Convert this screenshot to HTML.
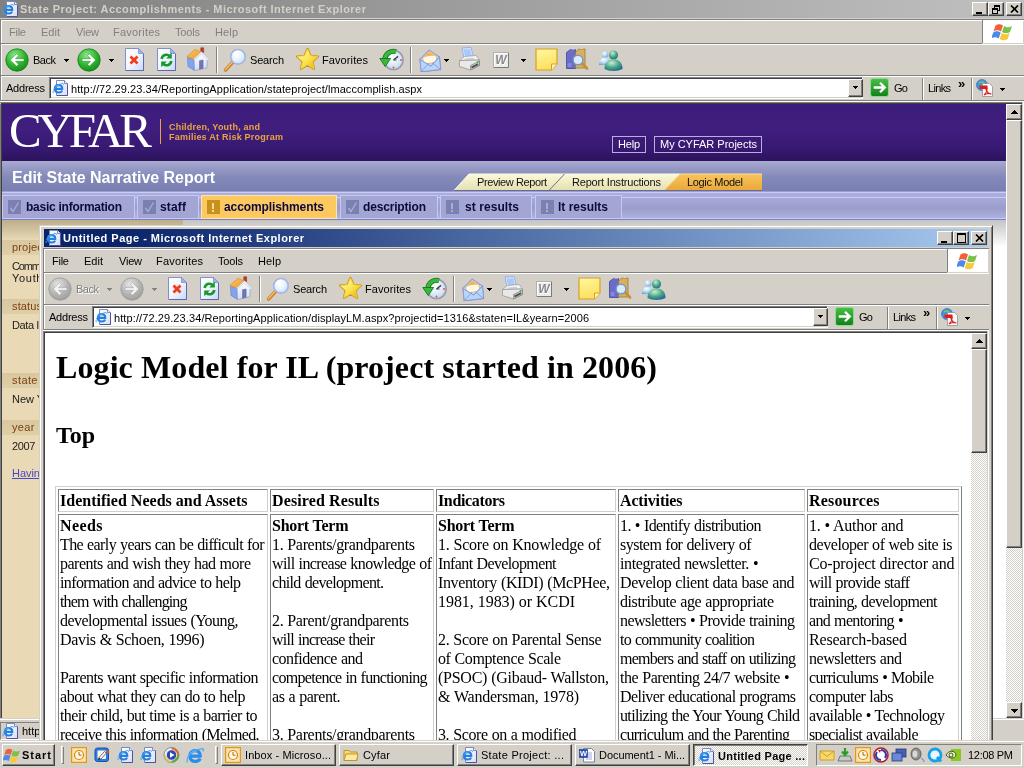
<!DOCTYPE html>
<html><head><meta charset="utf-8"><title>State Project: Accomplishments</title>
<style>
html,body{margin:0;padding:0}
body{width:1024px;height:768px;overflow:hidden;position:relative;background:#d4d0c8;font-family:"Liberation Sans",sans-serif}
div,span,svg{position:absolute}
.dith{background-color:#eae8e4;background-image:conic-gradient(#fff 25%,#d4d0c8 0 50%,#fff 0 75%,#d4d0c8 0);background-size:2px 2px}
</style></head><body><div id="root" style="left:0;top:0;width:1024px;height:768px;will-change:transform">
<div style="position:absolute;left:2px;top:104px;width:1004px;height:614px;background:#fff;"></div><div style="position:absolute;left:0px;top:102px;width:1px;height:617px;background:#808080;"></div><div style="position:absolute;left:1px;top:103px;width:1px;height:615px;background:#404040;"></div><div style="position:absolute;left:2px;top:104px;width:1004px;height:57px;background:linear-gradient(180deg,#3d1d7b 0%,#3f1e7e 45%,#371870 80%,#2c135c 100%);"></div><span id="t0" style="position:absolute;left:9px;top:103px;font:normal 49px/55px 'Liberation Serif', serif;color:#fff;white-space:pre;letter-spacing:-4.191px;">CYFAR</span><div style="position:absolute;left:160px;top:119px;width:1px;height:25px;background:#e9a33c;"></div><span id="t1" style="position:absolute;left:169px;top:122px;font:bold 9px/10px 'Liberation Sans', sans-serif;color:#eaa540;white-space:pre;letter-spacing:0.201px;">Children, Youth, and</span><span id="t2" style="position:absolute;left:169px;top:132px;font:bold 9px/10px 'Liberation Sans', sans-serif;color:#eaa540;white-space:pre;letter-spacing:0.230px;">Families At Risk Program</span><div style="position:absolute;left:612px;top:136px;width:34px;height:17px;background:transparent;box-sizing:border-box;border:1px solid #b9aede;"></div><span id="t3" style="position:absolute;left:618px;top:138px;font:normal 11px/12px 'Liberation Sans', sans-serif;color:#fff;white-space:pre;letter-spacing:-0.208px;">Help</span><div style="position:absolute;left:654px;top:136px;width:108px;height:17px;background:transparent;box-sizing:border-box;border:1px solid #b9aede;"></div><span id="t4" style="position:absolute;left:660px;top:138px;font:normal 11px/12px 'Liberation Sans', sans-serif;color:#fff;white-space:pre;letter-spacing:-0.012px;">My CYFAR Projects</span><div style="position:absolute;left:2px;top:161px;width:1004px;height:30px;background:linear-gradient(180deg,#a9acd0 0%,#9599c4 25%,#8389b8 55%,#797fb1 100%);"></div><span id="t5" style="position:absolute;left:12px;top:169px;font:bold 16px/17px 'Liberation Sans', sans-serif;color:#fff;white-space:pre;letter-spacing:-0.023px;">Edit State Narrative Report</span><svg style="position:absolute;left:452px;top:173px" width="312" height="19" viewBox="0 0 312 19">
<defs><linearGradient id="tc" x1="0" y1="0" x2="0" y2="1"><stop offset="0" stop-color="#fbf8d8"/><stop offset="1" stop-color="#e4e0b0"/></linearGradient>
<linearGradient id="to" x1="0" y1="0" x2="0" y2="1"><stop offset="0" stop-color="#f8c45c"/><stop offset="1" stop-color="#eaa838"/></linearGradient></defs>
<path d="M2 17.500L17 1h195L228 1 212 17.500z" fill="url(#tc)"/>
<path d="M2 17.500L17 1h211" fill="none" stroke="#fffef0" stroke-width="1"/>
<path d="M97 17.500L112.500 1" stroke="#6e6e8e" stroke-width="1"/>
<path d="M212 17.500L228 1h82v16.500z" fill="url(#to)"/>
<path d="M212 17.500L228 1h82" fill="none" stroke="#fce0a0" stroke-width="1"/>
<path d="M2 17.500h308" stroke="#6c6a92" stroke-width="1"/>
</svg><span id="t6" style="position:absolute;left:477px;top:176px;font:normal 11px/12px 'Liberation Sans', sans-serif;color:#111;white-space:pre;letter-spacing:-0.400px;">Preview Report</span><span id="t7" style="position:absolute;left:572px;top:176px;font:normal 11px/12px 'Liberation Sans', sans-serif;color:#111;white-space:pre;letter-spacing:-0.185px;">Report Instructions</span><span id="t8" style="position:absolute;left:687px;top:176px;font:normal 11px/12px 'Liberation Sans', sans-serif;color:#111;white-space:pre;letter-spacing:-0.333px;">Logic Model</span><div style="position:absolute;left:2px;top:191px;width:1004px;height:29px;background:linear-gradient(180deg,#9a9fd0 0,#9a9fd0 1px,#c9ccf6 1px,#c9ccf6 2px,#abaedc 2px,#abaedc 6px,#c9ccf6 6px,#c9ccf6 7px,#a8abd8 7px,#9a9dca 17px,#aeb1de 27px,#c8ccf8 27px,#c8ccf8 28px,#7c80c0 28px,#7c80c0 29px);"></div><div style="position:absolute;left:2px;top:195px;width:133px;height:24px;background:#a3a6d3;box-sizing:border-box;border:1px solid #c6c9f6;"></div><div style="position:absolute;left:8px;top:200px;width:13px;height:14px;background:#7b80b2;"></div><svg style="position:absolute;left:8px;top:200px" width="13" height="14" viewBox="0 0 13 14"><path d="M2.500 8l2.500 3.500L10.500 2.500" fill="none" stroke="#a9add9" stroke-width="1.300"/></svg><span id="t9" style="position:absolute;left:26px;top:200px;font:bold 12px/14px 'Liberation Sans', sans-serif;color:#0c0a3c;white-space:pre;letter-spacing:-0.251px;">basic information</span><div style="position:absolute;left:137px;top:195px;width:62px;height:24px;background:#a3a6d3;box-sizing:border-box;border:1px solid #c6c9f6;"></div><div style="position:absolute;left:143px;top:200px;width:13px;height:14px;background:#7b80b2;"></div><svg style="position:absolute;left:143px;top:200px" width="13" height="14" viewBox="0 0 13 14"><path d="M2.500 8l2.500 3.500L10.500 2.500" fill="none" stroke="#a9add9" stroke-width="1.300"/></svg><span id="t10" style="position:absolute;left:160px;top:200px;font:bold 12px/14px 'Liberation Sans', sans-serif;color:#0c0a3c;white-space:pre;letter-spacing:0.164px;">staff</span><div style="position:absolute;left:201px;top:195px;width:136px;height:24px;background:#fcc961;box-sizing:border-box;border:1px solid #ffe4a8;"></div><div style="position:absolute;left:207px;top:200px;width:13px;height:14px;background:#c8901c;"></div><div style="position:absolute;left:212px;top:203px;width:2px;height:6px;background:#f8dc98;"></div><div style="position:absolute;left:212px;top:210px;width:2px;height:2px;background:#f8dc98;"></div><span id="t11" style="position:absolute;left:224px;top:200px;font:bold 12px/14px 'Liberation Sans', sans-serif;color:#0c0a3c;white-space:pre;letter-spacing:-0.098px;">accomplishments</span><div style="position:absolute;left:340px;top:195px;width:98px;height:24px;background:#a3a6d3;box-sizing:border-box;border:1px solid #c6c9f6;"></div><div style="position:absolute;left:346px;top:200px;width:13px;height:14px;background:#7b80b2;"></div><svg style="position:absolute;left:346px;top:200px" width="13" height="14" viewBox="0 0 13 14"><path d="M2.500 8l2.500 3.500L10.500 2.500" fill="none" stroke="#a9add9" stroke-width="1.300"/></svg><span id="t12" style="position:absolute;left:363px;top:200px;font:bold 12px/14px 'Liberation Sans', sans-serif;color:#0c0a3c;white-space:pre;letter-spacing:-0.169px;">description</span><div style="position:absolute;left:440px;top:195px;width:92px;height:24px;background:#a3a6d3;box-sizing:border-box;border:1px solid #c6c9f6;"></div><div style="position:absolute;left:446px;top:200px;width:13px;height:14px;background:#7b80b2;"></div><div style="position:absolute;left:451px;top:203px;width:2px;height:6px;background:#a9add9;"></div><div style="position:absolute;left:451px;top:210px;width:2px;height:2px;background:#a9add9;"></div><span id="t13" style="position:absolute;left:465px;top:200px;font:bold 12px/14px 'Liberation Sans', sans-serif;color:#0c0a3c;white-space:pre;letter-spacing:0.071px;">st results</span><div style="position:absolute;left:535px;top:195px;width:87px;height:24px;background:#a3a6d3;box-sizing:border-box;border:1px solid #c6c9f6;"></div><div style="position:absolute;left:541px;top:200px;width:13px;height:14px;background:#7b80b2;"></div><div style="position:absolute;left:546px;top:203px;width:2px;height:6px;background:#a9add9;"></div><div style="position:absolute;left:546px;top:210px;width:2px;height:2px;background:#a9add9;"></div><span id="t14" style="position:absolute;left:558px;top:200px;font:bold 12px/14px 'Liberation Sans', sans-serif;color:#0c0a3c;white-space:pre;letter-spacing:-0.002px;">lt results</span><div style="position:absolute;left:2px;top:220px;width:181px;height:498px;background:#e9d9b4;"></div><div style="position:absolute;left:2px;top:220px;width:181px;height:20px;background:linear-gradient(180deg,#bcae8c,#e9d9b4);"></div><div style="position:absolute;left:183px;top:220px;width:823px;height:27px;background:linear-gradient(180deg,#c4c4c4,#ffffff);"></div><div style="position:absolute;left:2px;top:240px;width:181px;height:15px;background:linear-gradient(180deg,#d8c79f,#dfcfa8);"></div><span id="t15" style="position:absolute;left:12px;top:241px;font:normal 11px/12px 'Liberation Sans', sans-serif;color:#7b3f10;white-space:pre;letter-spacing:0.161px;">project</span><div style="position:absolute;left:2px;top:299px;width:181px;height:15px;background:linear-gradient(180deg,#d8c79f,#dfcfa8);"></div><span id="t16" style="position:absolute;left:12px;top:300px;font:normal 11px/12px 'Liberation Sans', sans-serif;color:#7b3f10;white-space:pre;letter-spacing:0.128px;">status</span><div style="position:absolute;left:2px;top:373px;width:181px;height:15px;background:linear-gradient(180deg,#d8c79f,#dfcfa8);"></div><span id="t17" style="position:absolute;left:12px;top:374px;font:normal 11px/12px 'Liberation Sans', sans-serif;color:#7b3f10;white-space:pre;letter-spacing:0.410px;">state</span><div style="position:absolute;left:2px;top:420px;width:181px;height:15px;background:linear-gradient(180deg,#d8c79f,#dfcfa8);"></div><span id="t18" style="position:absolute;left:12px;top:421px;font:normal 11px/12px 'Liberation Sans', sans-serif;color:#7b3f10;white-space:pre;letter-spacing:0.365px;">year</span><span id="t19" style="position:absolute;left:12px;top:260px;font:normal 11px/12px 'Liberation Sans', sans-serif;color:#222;white-space:pre;letter-spacing:-1.130px;">Comm</span><span id="t20" style="position:absolute;left:12px;top:272px;font:normal 11px/12px 'Liberation Sans', sans-serif;color:#222;white-space:pre;letter-spacing:0.688px;">Youth</span><span id="t21" style="position:absolute;left:12px;top:319px;font:normal 11px/12px 'Liberation Sans', sans-serif;color:#222;white-space:pre;letter-spacing:-0.411px;">Data In</span><span id="t22" style="position:absolute;left:12px;top:393px;font:normal 11px/12px 'Liberation Sans', sans-serif;color:#222;white-space:pre;letter-spacing:-0.051px;">New Y</span><span id="t23" style="position:absolute;left:12px;top:440px;font:normal 11px/12px 'Liberation Sans', sans-serif;color:#222;white-space:pre;letter-spacing:-0.328px;">2007</span><span id="t24" style="position:absolute;left:12px;top:467px;font:normal 11px/12px 'Liberation Sans', sans-serif;color:#4747c9;white-space:pre;letter-spacing:-0.050px;text-decoration:underline;">Having</span>
<div style="position:absolute;left:0px;top:0px;width:1024px;height:104px;background:#d4d0c8;"></div><div style="position:absolute;left:0px;top:0px;width:1024px;height:18px;background:linear-gradient(90deg,#808080 0%,#c0c0c0 100%);"></div><svg style="position:absolute;left:2px;top:1px" width="16" height="16" viewBox="0 0 16 16">
<defs><linearGradient id="g1" x1="0" y1="0" x2="1" y2="1"><stop offset="0" stop-color="#ffffff"/><stop offset="1" stop-color="#d9def6"/></linearGradient></defs>
<path d="M4.500 .5h8l3 3v12h-11z" fill="url(#g1)" stroke="#8088b8" stroke-width="1"/>
<path d="M12.500 .5v3h3" fill="#eef0ff" stroke="#6870b4" stroke-width=".8"/>
<path d="M15.500 4v11.500h-10.500" fill="none" stroke="#50549a" stroke-width="1"/>
<path d="M2.800 8.800h7.400c.2-2.300-1.300-3.700-3.500-3.700-2.300 0-3.800 1.500-3.800 3.700 0 2.200 1.600 3.700 3.900 3.700 1.600 0 2.700-.6 3.300-1.900" fill="none" stroke="#2480e2" stroke-width="2.200"/>
<path d="M3.200 7.300c.8-1.600 2.400-2.300 4-1.900" fill="none" stroke="#4cb4f6" stroke-width=".9"/>
<path d="M1.300 13.200C0 10.300 3.500 5.300 10 3.600c1.700-.4 2 .3 1.400 1.200" fill="none" stroke="#3e9cec" stroke-width=".9" stroke-dasharray="2.500 .6"/>
</svg><span id="t25" style="position:absolute;left:20px;top:3px;font:bold 11px/12px 'Liberation Sans', sans-serif;color:#d4d0c8;white-space:pre;letter-spacing:0.463px;">State Project: Accomplishments - Microsoft Internet Explorer</span><div style="position:absolute;left:972px;top:2px;width:16px;height:14px;background:#d4d0c8;box-sizing:border-box;border:1px solid;border-color:#fff #404040 #404040 #fff;box-shadow:inset -1px -1px 0 #808080, inset 1px 1px 0 #d4d0c8;"><div style="position:absolute;left:3px;top:9px;width:6px;height:2px;background:#000;"></div></div><div style="position:absolute;left:988px;top:2px;width:16px;height:14px;background:#d4d0c8;box-sizing:border-box;border:1px solid;border-color:#fff #404040 #404040 #fff;box-shadow:inset -1px -1px 0 #808080, inset 1px 1px 0 #d4d0c8;"><div style="position:absolute;left:5px;top:2px;width:6px;height:1px;background:#000;"></div><div style="position:absolute;left:5px;top:3px;width:6px;height:1px;background:#000;"></div><div style="position:absolute;left:5px;top:3px;width:1px;height:3px;background:#000;"></div><div style="position:absolute;left:10px;top:3px;width:1px;height:5px;background:#000;"></div><div style="position:absolute;left:8px;top:7px;width:3px;height:1px;background:#000;"></div><div style="position:absolute;left:3px;top:5px;width:6px;height:2px;background:#000;"></div><div style="position:absolute;left:3px;top:6px;width:1px;height:5px;background:#000;"></div><div style="position:absolute;left:8px;top:6px;width:1px;height:5px;background:#000;"></div><div style="position:absolute;left:3px;top:10px;width:6px;height:1px;background:#000;"></div></div><div style="position:absolute;left:1006px;top:2px;width:16px;height:14px;background:#d4d0c8;box-sizing:border-box;border:1px solid;border-color:#fff #404040 #404040 #fff;box-shadow:inset -1px -1px 0 #808080, inset 1px 1px 0 #d4d0c8;"><svg style="position:absolute;left:3px;top:2px" width="9" height="8" viewBox="0 0 8 8"><path d="M.5 .5l7 7M7.500 .5l-7 7" stroke="#000" stroke-width="1.700" fill="none"/></svg></div><div style="position:absolute;left:0px;top:19px;width:1024px;height:1px;background:#808080;"></div><div style="position:absolute;left:0px;top:20px;width:1024px;height:1px;background:#fff;"></div><div style="position:absolute;left:0px;top:19px;width:1px;height:82px;background:#808080;"></div><div style="position:absolute;left:1px;top:20px;width:1px;height:81px;background:#fff;"></div><span id="t26" style="position:absolute;left:9px;top:26px;font:normal 11px/12px 'Liberation Sans', sans-serif;color:#808080;white-space:pre;letter-spacing:-0.245px;">File</span><span id="t27" style="position:absolute;left:41px;top:26px;font:normal 11px/12px 'Liberation Sans', sans-serif;color:#808080;white-space:pre;letter-spacing:0.010px;">Edit</span><span id="t28" style="position:absolute;left:76px;top:26px;font:normal 11px/12px 'Liberation Sans', sans-serif;color:#808080;white-space:pre;letter-spacing:-0.219px;">View</span><span id="t29" style="position:absolute;left:113px;top:26px;font:normal 11px/12px 'Liberation Sans', sans-serif;color:#808080;white-space:pre;letter-spacing:0.219px;">Favorites</span><span id="t30" style="position:absolute;left:175px;top:26px;font:normal 11px/12px 'Liberation Sans', sans-serif;color:#808080;white-space:pre;letter-spacing:-0.172px;">Tools</span><span id="t31" style="position:absolute;left:215px;top:26px;font:normal 11px/12px 'Liberation Sans', sans-serif;color:#808080;white-space:pre;letter-spacing:0.125px;">Help</span><div style="position:absolute;left:982px;top:20px;width:1px;height:23px;background:#808080;"></div><div style="position:absolute;left:983px;top:21px;width:40px;height:22px;background:#fff;"></div><svg style="position:absolute;left:992px;top:22px" width="22" height="20" viewBox="0 0 22 20">
<path d="M3.500 3.500c3-2 5-1.500 7.500 0l-2 6c-2.500-1.500-4.500-2-7.500 0z" fill="#f0603a"/>
<path d="M12 4c2.500 1.500 5 1.800 8 0l-2 6c-3 1.800-5.500 1.500-8 0z" fill="#7cc04a"/>
<path d="M1.200 10.500c3-2 5-1.500 7.500 0l-2 6c-2.500-1.500-4.500-2-7.500 0z" fill="#4a8ae8" transform="translate(0 0)"/>
<path d="M9.700 11c2.500 1.500 5 1.800 8 0l-2 6c-3 1.800-5.500 1.500-8 0z" fill="#f8c838"/>
</svg><div style="position:absolute;left:0px;top:43px;width:982px;height:1px;background:#808080;"></div><div style="position:absolute;left:1px;top:44px;width:1023px;height:1px;background:#fff;"></div><svg style="position:absolute;left:5px;top:48px" width="24" height="24" viewBox="0 0 24 24">
<defs><radialGradient id="g2" cx=".4" cy=".3" r=".8"><stop offset="0" stop-color="#8fe88a"/><stop offset=".55" stop-color="#2db52d"/><stop offset="1" stop-color="#12801a"/></radialGradient></defs>
<circle cx="12" cy="12" r="11.2" fill="url(#g2)" stroke="#12801a" stroke-width=".8"/>
<g><path d="M5.2 12l6.4-6.2 1.9 1.9-3 3H19v2.6h-8.5l3 3-1.9 1.9z" fill="#ffffff" stroke="#12801a" stroke-width=".5"/></g>
</svg><span id="t32" style="position:absolute;left:33px;top:54px;font:normal 11px/12px 'Liberation Sans', sans-serif;color:#000;white-space:pre;letter-spacing:-0.490px;">Back</span><div style="position:absolute;left:64px;top:59px;width:5px;height:1px;background:#000;"></div><div style="position:absolute;left:65px;top:60px;width:3px;height:1px;background:#000;"></div><div style="position:absolute;left:66px;top:61px;width:1px;height:1px;background:#000;"></div><svg style="position:absolute;left:77px;top:48px" width="24" height="24" viewBox="0 0 24 24">
<defs><radialGradient id="g3" cx=".4" cy=".3" r=".8"><stop offset="0" stop-color="#8fe88a"/><stop offset=".55" stop-color="#2db52d"/><stop offset="1" stop-color="#12801a"/></radialGradient></defs>
<circle cx="12" cy="12" r="11.2" fill="url(#g3)" stroke="#12801a" stroke-width=".8"/>
<g transform="translate(24 0) scale(-1 1)"><path d="M5.2 12l6.4-6.2 1.9 1.9-3 3H19v2.6h-8.5l3 3-1.9 1.9z" fill="#ffffff" stroke="#12801a" stroke-width=".5"/></g>
</svg><div style="position:absolute;left:109px;top:59px;width:5px;height:1px;background:#000;"></div><div style="position:absolute;left:110px;top:60px;width:3px;height:1px;background:#000;"></div><div style="position:absolute;left:111px;top:61px;width:1px;height:1px;background:#000;"></div><svg style="position:absolute;left:125px;top:48px" width="19" height="23" viewBox="0 0 19 23"><defs><linearGradient id="g4" x1="0" y1="0" x2="1" y2="1"><stop offset="0" stop-color="#ffffff"/><stop offset=".5" stop-color="#f0f5ff"/><stop offset="1" stop-color="#c9d8f8"/></linearGradient></defs>
<path d="M.5 .5h13l5 5v17h-18z" fill="url(#g4)" stroke="#7f8fcf" stroke-width="1"/>
<path d="M13.500 .5v5h5z" fill="#9db4ee" stroke="#7f8fcf" stroke-width=".8"/>
<path d="M18.500 6v16.500H1" fill="none" stroke="#5c68b0" stroke-width="1"/><path d="M5.500 8.500l7 7M12.500 8.500l-7 7" stroke="#f43a17" stroke-width="2.800"/></svg><svg style="position:absolute;left:157px;top:48px" width="19" height="23" viewBox="0 0 19 23"><defs><linearGradient id="g5" x1="0" y1="0" x2="1" y2="1"><stop offset="0" stop-color="#ffffff"/><stop offset=".5" stop-color="#f0f5ff"/><stop offset="1" stop-color="#c9d8f8"/></linearGradient></defs>
<path d="M.5 .5h13l5 5v17h-18z" fill="url(#g5)" stroke="#7f8fcf" stroke-width="1"/>
<path d="M13.500 .5v5h5z" fill="#9db4ee" stroke="#7f8fcf" stroke-width=".8"/>
<path d="M18.500 6v16.500H1" fill="none" stroke="#5c68b0" stroke-width="1"/>
<path d="M4.700 11a4.800 4.800 0 0 1 8-3" fill="none" stroke="#169a26" stroke-width="2.600"/>
<path d="M14.800 4.800v5.600h-5.600z" fill="#169a26"/>
<path d="M14.300 13a4.800 4.800 0 0 1-8 3" fill="none" stroke="#169a26" stroke-width="2.600"/>
<path d="M4.200 19.200v-5.600h5.600z" fill="#169a26"/>
</svg><svg style="position:absolute;left:186px;top:47px" width="24" height="24" viewBox="0 0 24 24">
<defs><linearGradient id="g6" x1="0" y1="0" x2="1" y2="1"><stop offset="0" stop-color="#f9c565"/><stop offset="1" stop-color="#ee9a2a"/></linearGradient>
<linearGradient id="g7" x1="0" y1="0" x2="0" y2="1"><stop offset="0" stop-color="#ffffff"/><stop offset="1" stop-color="#d4dcf4"/></linearGradient></defs>
<path d="M14.800 .8h2.800v5l-2.800-1.500z" fill="#c63a20" stroke="#8a2410" stroke-width=".5"/>
<path d="M1.500 10.500L8 12.500l.5 11L2 19.500z" fill="#7fa6ea" stroke="#5a80cc" stroke-width=".6"/>
<path d="M8 12l7.500-6.500 7 7-1.500.8v7.500L8.500 23.500z" fill="url(#g7)" stroke="#8b9ad0" stroke-width=".7"/>
<path d="M.8 9.500L9 2.300l6.700 2.900L7.600 12.300z" fill="url(#g6)" stroke="#d98a1c" stroke-width=".6"/>
<path d="M15.500 4.800l7.700 7.700-1.200 1-6.600-6.600-7.400 6.200-.6-1z" fill="#fbfbff" stroke="#a3acd8" stroke-width=".5"/>
<path d="M13.500 13.800l3.600-.8v8.300l-3.600 1z" fill="#6f76b4" stroke="#565c9c" stroke-width=".5"/>
</svg><div style="position:absolute;left:216px;top:47px;width:1px;height:26px;background:#808080;"></div><div style="position:absolute;left:217px;top:47px;width:1px;height:26px;background:#fff;"></div><svg style="position:absolute;left:223px;top:48px" width="24" height="24" viewBox="0 0 24 24">
<defs><radialGradient id="g8" cx=".4" cy=".35" r=".75"><stop offset="0" stop-color="#ffffff"/><stop offset=".55" stop-color="#e4f1ff"/><stop offset="1" stop-color="#b5d4f8"/></radialGradient></defs>
<path d="M9.500 14.500L2.500 22" stroke="#c47e22" stroke-width="3.400" stroke-linecap="round"/>
<path d="M9.300 14.300L2.300 21.800" stroke="#f6c070" stroke-width="1.400" stroke-linecap="round"/>
<circle cx="15" cy="8.800" r="7.300" fill="url(#g8)" stroke="#a3b4e6" stroke-width="1.600"/>
<path d="M10.500 6.500a5 5 0 0 1 5-3" fill="none" stroke="#ffffff" stroke-width="1.400" stroke-linecap="round"/>
</svg><span id="t33" style="position:absolute;left:250px;top:54px;font:normal 11px/12px 'Liberation Sans', sans-serif;color:#000;white-space:pre;letter-spacing:-0.172px;">Search</span><svg style="position:absolute;left:294.5px;top:47px" width="25" height="24" viewBox="0 0 25 24">
<defs><linearGradient id="g9" x1="0" y1="0" x2="1" y2="1"><stop offset="0" stop-color="#fffcc0"/><stop offset=".55" stop-color="#fbe248"/><stop offset="1" stop-color="#e6a40c"/></linearGradient></defs>
<path d="M12.500 2l3 6.800 7.500 .7-5.700 5 1.800 7.300-6.600-4-6.600 4 1.800-7.300L2 9.500l7.500-.7z" fill="url(#g9)" stroke="#c8900e" stroke-width="2.200" stroke-linejoin="round"/>
<path d="M12.500 2l3 6.800 7.500 .7-5.700 5 1.800 7.300-6.600-4-6.600 4 1.800-7.300L2 9.500l7.500-.7z" fill="url(#g9)" stroke="#f4d23c" stroke-width=".9" stroke-linejoin="round"/>
</svg><span id="t34" style="position:absolute;left:322px;top:54px;font:normal 11px/12px 'Liberation Sans', sans-serif;color:#000;white-space:pre;letter-spacing:0.094px;">Favorites</span><svg style="position:absolute;left:379px;top:48px" width="25" height="24" viewBox="0 0 25 24">
<defs><radialGradient id="g10" cx=".45" cy=".4" r=".7"><stop offset="0" stop-color="#ffffff"/><stop offset="1" stop-color="#bcd4ee"/></radialGradient></defs>
<circle cx="14.500" cy="12" r="9.600" fill="url(#g10)" stroke="#9a9cb4" stroke-width="1.800"/>
<path d="M14.500 12l4.600-3.600" stroke="#3a4048" stroke-width="1.400"/><path d="M14.500 12h3" stroke="#3a4048" stroke-width="1"/>
<circle cx="22" cy="12" r=".9" fill="#e8482a"/><circle cx="14.500" cy="19.500" r=".9" fill="#e8482a"/>
<path d="M17 3.600A8.800 8.800 0 0 0 5.800 11.500" fill="none" stroke="#12781a" stroke-width="5"/>
<path d="M17 3.600A8.800 8.800 0 0 0 5.800 11.500" fill="none" stroke="#3cb63c" stroke-width="3.600"/>
<path d="M.8 10.500h10.800L6.200 18.500z" fill="#3cb63c" stroke="#12781a" stroke-width=".9" stroke-linejoin="round"/>
</svg><div style="position:absolute;left:410px;top:47px;width:1px;height:26px;background:#808080;"></div><div style="position:absolute;left:411px;top:47px;width:1px;height:26px;background:#fff;"></div><svg style="position:absolute;left:419px;top:47.5px" width="23" height="24" viewBox="0 0 23 24"><g transform="matrix(1 -.12 .1 1 -1.500 2)">
<path d="M1.500 9.500L11.500 1.500l9.500 8v12.500h-19.500z" fill="#c4e0fb" stroke="#8f96d4" stroke-width="1"/>
<path d="M4.500 8.500l7-5.500 6.500 5.500v6h-13.500z" fill="#fff8e4" stroke="#e0b060" stroke-width=".7"/>
<path d="M5 8.300l6.500-5L17.500 8.300c-4-1.500-8.500-1.500-12.500 0z" fill="#f4b454"/>
<path d="M1.500 9.500l10 8 9.500-8v12.500h-19.500z" fill="#b4d8fa" stroke="#8f96d4" stroke-width="1"/>
<path d="M1.500 22l8.300-7.600M21 22l-7.800-7.600" stroke="#8f96d4" stroke-width=".9"/></g>
</svg><div style="position:absolute;left:444px;top:59px;width:5px;height:1px;background:#000;"></div><div style="position:absolute;left:445px;top:60px;width:3px;height:1px;background:#000;"></div><div style="position:absolute;left:446px;top:61px;width:1px;height:1px;background:#000;"></div><svg style="position:absolute;left:457px;top:47px" width="24" height="24" viewBox="0 0 24 24">
<path d="M5 1l9-.5 2.500 9.500-9.500 1z" fill="#d8e8ff" stroke="#8aa4dc" stroke-width=".8"/>
<path d="M6.500 2.500l6.500-.4 2 7-7 .7z" fill="#a9c9fa"/>
<path d="M2.500 13.500l5-4 11.500-1 3.500 4.500z" fill="#f4f4f4" stroke="#9a9a9a" stroke-width=".7"/>
<path d="M7.500 11.500l9-.8 1.500 1.800-9.500 1z" fill="#d0d0d0"/>
<path d="M2.500 13.500l20-.5v5.500l-9 4.500-11-3.500z" fill="#e9e9e9" stroke="#8c8c8c" stroke-width=".7"/>
<path d="M13.500 18.500l9-4.500v4.500l-9 4.500z" fill="#bdbdbd" stroke="#7c7c7c" stroke-width=".6"/>
<path d="M14.500 20.500l6.500-3.200" stroke="#4c4c4c" stroke-width="1.600"/>
<circle cx="20.500" cy="15" r=".9" fill="#3cc43c"/>
</svg><svg style="position:absolute;left:493px;top:52px" width="16" height="16" viewBox="0 0 16 16">
<rect x=".5" y=".5" width="15" height="15" fill="#ececec" stroke="#b0b0b0"/>
<path d="M1 15.500h14.500V1" fill="none" stroke="#7a7a7a" stroke-width="1"/>
<path d="M1.500 14.500v-13h13" fill="none" stroke="#ffffff" stroke-width="1"/>
<text x="8.500" y="12.500" text-anchor="middle" font-family="Liberation Sans, sans-serif" font-weight="bold" font-style="italic" font-size="12" fill="#ffffff">W</text>
<text x="8" y="12" text-anchor="middle" font-family="Liberation Sans, sans-serif" font-weight="bold" font-style="italic" font-size="12" fill="#8a8a8a">W</text>
</svg><div style="position:absolute;left:521px;top:59px;width:5px;height:1px;background:#000;"></div><div style="position:absolute;left:522px;top:60px;width:3px;height:1px;background:#000;"></div><div style="position:absolute;left:523px;top:61px;width:1px;height:1px;background:#000;"></div><svg style="position:absolute;left:535px;top:48px" width="23" height="23" viewBox="0 0 23 23">
<defs><linearGradient id="g11" x1="0" y1="0" x2=".3" y2="1"><stop offset="0" stop-color="#fff8a0"/><stop offset="1" stop-color="#fde060"/></linearGradient></defs>
<path d="M1 1h21v15l-5.500 6H1z" fill="url(#g11)" stroke="#d8a020" stroke-width="1.200"/>
<path d="M22 16h-5.500v6" fill="#fff4b0" stroke="#d8a020" stroke-width="1"/>
</svg><svg style="position:absolute;left:565px;top:48px" width="24" height="23" viewBox="0 0 24 23">
<path d="M1.500 4.500l4-3h5v19h-9z" fill="#6a6cc8" stroke="#4044a0" stroke-width=".8"/>
<path d="M5.500 1.500l3-1 2 1z" fill="#e8e8f8"/>
<path d="M2.500 16h4M2.500 18h4" stroke="#a8aaf0" stroke-width=".9"/>
<path d="M10.500 4l3.500-3h6v19h-9.500z" fill="#d8b060" stroke="#a07828" stroke-width=".8"/>
<path d="M14 1l2.500-.8 2.500.8z" fill="#f4f0e0"/>
<path d="M16 14l6 6.500" stroke="#c89030" stroke-width="2.600" stroke-linecap="round"/>
<circle cx="13" cy="12" r="4.800" fill="#d8ecfc" stroke="#7898c8" stroke-width="1.400"/>
</svg><svg style="position:absolute;left:598px;top:48px" width="25" height="24" viewBox="0 0 25 24">
<defs><radialGradient id="g12" cx=".4" cy=".3" r=".8"><stop offset="0" stop-color="#c8f0d0"/><stop offset=".5" stop-color="#48a888"/><stop offset="1" stop-color="#205890"/></radialGradient>
<radialGradient id="g13" cx=".4" cy=".3" r=".8"><stop offset="0" stop-color="#ffffff"/><stop offset=".6" stop-color="#a8d0f0"/><stop offset="1" stop-color="#5890d0"/></radialGradient></defs>
<circle cx="7" cy="6.500" r="3.200" fill="url(#g13)"/>
<path d="M1 17c0-6 3-7.500 6-7.500s5 1.500 5.500 7.500z" fill="url(#g13)"/>
<circle cx="15.500" cy="7" r="4.600" fill="url(#g12)"/>
<path d="M6.500 21c0-7 4-9.500 9-9.500s9 2.500 9 9.500c-5 2.500-13 2.500-18 0z" fill="url(#g12)"/>
</svg><div style="position:absolute;left:0px;top:75px;width:1024px;height:1px;background:#808080;"></div><div style="position:absolute;left:1px;top:76px;width:1023px;height:1px;background:#fff;"></div><span id="t35" style="position:absolute;left:6px;top:82px;font:normal 11px/12px 'Liberation Sans', sans-serif;color:#000;white-space:pre;letter-spacing:-0.227px;">Address</span><div style="position:absolute;left:49px;top:77px;width:814px;height:22px;background:#fff;box-sizing:border-box;border:1px solid;border-color:#808080 #fff #fff #808080;box-shadow:inset 1px 1px 0 #404040, inset -1px -1px 0 #d4d0c8;"></div><svg style="position:absolute;left:52px;top:80px" width="16" height="16" viewBox="0 0 16 16">
<defs><linearGradient id="g14" x1="0" y1="0" x2="1" y2="1"><stop offset="0" stop-color="#ffffff"/><stop offset="1" stop-color="#d9def6"/></linearGradient></defs>
<path d="M4.500 .5h8l3 3v12h-11z" fill="url(#g14)" stroke="#8088b8" stroke-width="1"/>
<path d="M12.500 .5v3h3" fill="#eef0ff" stroke="#6870b4" stroke-width=".8"/>
<path d="M15.500 4v11.500h-10.500" fill="none" stroke="#50549a" stroke-width="1"/>
<path d="M2.800 8.800h7.400c.2-2.300-1.300-3.700-3.500-3.700-2.300 0-3.800 1.500-3.800 3.700 0 2.200 1.600 3.700 3.900 3.700 1.600 0 2.700-.6 3.300-1.900" fill="none" stroke="#2480e2" stroke-width="2.200"/>
<path d="M3.200 7.300c.8-1.600 2.400-2.300 4-1.900" fill="none" stroke="#4cb4f6" stroke-width=".9"/>
<path d="M1.300 13.200C0 10.300 3.500 5.300 10 3.600c1.700-.4 2 .3 1.400 1.200" fill="none" stroke="#3e9cec" stroke-width=".9" stroke-dasharray="2.500 .6"/>
</svg><span id="t36" style="position:absolute;left:71px;top:83px;font:normal 11px/12px 'Liberation Sans', sans-serif;color:#000;white-space:pre;letter-spacing:0.071px;">http://72.29.23.34/ReportingApplication/stateproject/lmaccomplish.aspx</span><div style="position:absolute;left:848px;top:79px;width:15px;height:18px;background:#d4d0c8;box-sizing:border-box;border:1px solid;border-color:#fff #404040 #404040 #fff;box-shadow:inset -1px -1px 0 #808080, inset 1px 1px 0 #d4d0c8;"><div style="position:absolute;left:4px;top:6px;width:5px;height:1px;background:#000;"></div><div style="position:absolute;left:5px;top:7px;width:3px;height:1px;background:#000;"></div><div style="position:absolute;left:6px;top:8px;width:1px;height:1px;background:#000;"></div></div><svg style="position:absolute;left:870px;top:78px" width="19" height="19" viewBox="0 0 18 18">
<defs><linearGradient id="g15" x1="0" y1="0" x2="0" y2="1"><stop offset="0" stop-color="#48c048"/><stop offset="1" stop-color="#108018"/></linearGradient></defs>
<rect x=".5" y=".5" width="17" height="17" rx="2" fill="url(#g15)" stroke="#8fd88f" stroke-width="1"/>
<path d="M3.500 9h10M9.500 4.500L14 9l-4.500 4.500" fill="none" stroke="#fff" stroke-width="2.200"/>
</svg><span id="t37" style="position:absolute;left:894px;top:82px;font:normal 11px/12px 'Liberation Sans', sans-serif;color:#000;white-space:pre;letter-spacing:-0.688px;">Go</span><div style="position:absolute;left:922px;top:78px;width:1px;height:22px;background:#808080;"></div><div style="position:absolute;left:923px;top:78px;width:1px;height:22px;background:#fff;"></div><span id="t38" style="position:absolute;left:928px;top:82px;font:normal 11px/12px 'Liberation Sans', sans-serif;color:#000;white-space:pre;letter-spacing:-0.672px;">Links</span><span id="t39" style="position:absolute;left:958px;top:76px;font:bold 13px/15px 'Liberation Sans', sans-serif;color:#000;white-space:pre;">»</span><div style="position:absolute;left:971px;top:78px;width:1px;height:22px;background:#808080;"></div><div style="position:absolute;left:972px;top:78px;width:1px;height:22px;background:#fff;"></div><svg style="position:absolute;left:976px;top:79px" width="18" height="18" viewBox="0 0 18 18">
<circle cx="6" cy="6" r="5.500" fill="#4890e0" stroke="#2860b0" stroke-width=".6"/>
<path d="M3 4c2-2 5-1 5 1s-3 1-3 3" fill="none" stroke="#70d060" stroke-width="1.400"/>
<path d="M6.500 4.500h7l3 3V17.500h-10z" fill="#fcfcfc" stroke="#909090" stroke-width=".8"/>
<path d="M3.500 6.500h8v3.500h-8z" fill="#d82020"/>
<path d="M8 16c2-2 3.500-5 3-7-.5-1-1.500 0-1 1.500 1 3 3 4.500 5.500 4.500-2-.8-5.500 0-7.500 1z" fill="none" stroke="#e02020" stroke-width="1.100"/>
</svg><div style="position:absolute;left:1000px;top:88px;width:5px;height:1px;background:#000;"></div><div style="position:absolute;left:1001px;top:89px;width:3px;height:1px;background:#000;"></div><div style="position:absolute;left:1002px;top:90px;width:1px;height:1px;background:#000;"></div><div style="position:absolute;left:0px;top:100px;width:1024px;height:1px;background:#808080;"></div><div style="position:absolute;left:0px;top:101px;width:1024px;height:1px;background:#fff;"></div><div style="position:absolute;left:0px;top:102px;width:1024px;height:1px;background:#808080;"></div><div style="position:absolute;left:1px;top:103px;width:1022px;height:1px;background:#404040;"></div>
<div style="position:absolute;left:1022px;top:102px;width:1px;height:617px;background:#d4d0c8;"></div><div style="position:absolute;left:1023px;top:102px;width:1px;height:618px;background:#fff;"></div><div class="dith" style="left:1006px;top:104px;width:16px;height:614px"></div><div style="position:absolute;left:1006px;top:104px;width:16px;height:16px;background:#d4d0c8;box-sizing:border-box;border:1px solid;border-color:#fff #404040 #404040 #fff;box-shadow:inset -1px -1px 0 #808080, inset 1px 1px 0 #d4d0c8;"><div style="position:absolute;left:7px;top:5px;width:1px;height:1px;background:#000;"></div><div style="position:absolute;left:6px;top:6px;width:3px;height:1px;background:#000;"></div><div style="position:absolute;left:5px;top:7px;width:5px;height:1px;background:#000;"></div><div style="position:absolute;left:4px;top:8px;width:7px;height:1px;background:#000;"></div></div><div style="position:absolute;left:1006px;top:120px;width:16px;height:428px;background:#d4d0c8;box-sizing:border-box;border:1px solid;border-color:#fff #404040 #404040 #fff;box-shadow:inset -1px -1px 0 #808080, inset 1px 1px 0 #d4d0c8;"></div><div style="position:absolute;left:1006px;top:702px;width:16px;height:16px;background:#d4d0c8;box-sizing:border-box;border:1px solid;border-color:#fff #404040 #404040 #fff;box-shadow:inset -1px -1px 0 #808080, inset 1px 1px 0 #d4d0c8;"><div style="position:absolute;left:4px;top:6px;width:7px;height:1px;background:#000;"></div><div style="position:absolute;left:5px;top:7px;width:5px;height:1px;background:#000;"></div><div style="position:absolute;left:6px;top:8px;width:3px;height:1px;background:#000;"></div><div style="position:absolute;left:7px;top:9px;width:1px;height:1px;background:#000;"></div></div><div style="position:absolute;left:0px;top:718px;width:1024px;height:1px;background:#d4d0c8;"></div><div style="position:absolute;left:0px;top:719px;width:1024px;height:1px;background:#fff;"></div><div style="position:absolute;left:0px;top:720px;width:1024px;height:20px;background:#d4d0c8;"></div><div style="position:absolute;left:0px;top:722px;width:700px;height:18px;background:#d4d0c8;box-sizing:border-box;border:1px solid;border-color:#808080 #fff #fff #808080;"></div><svg style="position:absolute;left:2px;top:723px" width="16" height="16" viewBox="0 0 16 16">
<defs><linearGradient id="g16" x1="0" y1="0" x2="1" y2="1"><stop offset="0" stop-color="#ffffff"/><stop offset="1" stop-color="#d9def6"/></linearGradient></defs>
<path d="M4.500 .5h8l3 3v12h-11z" fill="url(#g16)" stroke="#8088b8" stroke-width="1"/>
<path d="M12.500 .5v3h3" fill="#eef0ff" stroke="#6870b4" stroke-width=".8"/>
<path d="M15.500 4v11.500h-10.500" fill="none" stroke="#50549a" stroke-width="1"/>
<path d="M2.800 8.800h7.400c.2-2.300-1.300-3.700-3.500-3.700-2.300 0-3.800 1.500-3.800 3.700 0 2.200 1.600 3.700 3.900 3.700 1.600 0 2.700-.6 3.300-1.900" fill="none" stroke="#2480e2" stroke-width="2.200"/>
<path d="M3.200 7.300c.8-1.600 2.400-2.300 4-1.900" fill="none" stroke="#4cb4f6" stroke-width=".9"/>
<path d="M1.300 13.200C0 10.300 3.500 5.300 10 3.600c1.700-.4 2 .3 1.400 1.200" fill="none" stroke="#3e9cec" stroke-width=".9" stroke-dasharray="2.500 .6"/>
</svg><span id="t40" style="position:absolute;left:22px;top:725px;font:normal 11px/12px 'Liberation Sans', sans-serif;color:#000;white-space:pre;">http://72.29.23.34/</span>
<div style="position:absolute;left:39px;top:225px;width:954px;height:560px;background:#d4d0c8;box-sizing:border-box;border:1px solid;border-color:#d4d0c8 #404040 #404040 #d4d0c8;box-shadow:inset 1px 1px 0 #fff, inset -1px -1px 0 #808080;"></div><div style="position:absolute;left:43px;top:229px;width:946px;height:104px;background:#d4d0c8;"></div><div style="position:absolute;left:44px;top:229px;width:944px;height:18px;background:linear-gradient(90deg,#0a246a 0%,#0a246a 8%,#a6caf0 100%);"></div><svg style="position:absolute;left:45px;top:230px" width="16" height="16" viewBox="0 0 16 16">
<defs><linearGradient id="g17" x1="0" y1="0" x2="1" y2="1"><stop offset="0" stop-color="#ffffff"/><stop offset="1" stop-color="#d9def6"/></linearGradient></defs>
<path d="M4.500 .5h8l3 3v12h-11z" fill="url(#g17)" stroke="#8088b8" stroke-width="1"/>
<path d="M12.500 .5v3h3" fill="#eef0ff" stroke="#6870b4" stroke-width=".8"/>
<path d="M15.500 4v11.500h-10.500" fill="none" stroke="#50549a" stroke-width="1"/>
<path d="M2.800 8.800h7.400c.2-2.300-1.300-3.700-3.500-3.700-2.300 0-3.800 1.500-3.800 3.700 0 2.200 1.600 3.700 3.900 3.700 1.600 0 2.700-.6 3.300-1.900" fill="none" stroke="#2480e2" stroke-width="2.200"/>
<path d="M3.200 7.300c.8-1.600 2.400-2.300 4-1.900" fill="none" stroke="#4cb4f6" stroke-width=".9"/>
<path d="M1.300 13.200C0 10.300 3.500 5.300 10 3.600c1.700-.4 2 .3 1.400 1.200" fill="none" stroke="#3e9cec" stroke-width=".9" stroke-dasharray="2.500 .6"/>
</svg><span id="t41" style="position:absolute;left:63px;top:232px;font:bold 11px/12px 'Liberation Sans', sans-serif;color:#fff;white-space:pre;letter-spacing:0.485px;">Untitled Page - Microsoft Internet Explorer</span><div style="position:absolute;left:937px;top:231px;width:16px;height:14px;background:#d4d0c8;box-sizing:border-box;border:1px solid;border-color:#fff #404040 #404040 #fff;box-shadow:inset -1px -1px 0 #808080, inset 1px 1px 0 #d4d0c8;"><div style="position:absolute;left:3px;top:9px;width:6px;height:2px;background:#000;"></div></div><div style="position:absolute;left:953px;top:231px;width:16px;height:14px;background:#d4d0c8;box-sizing:border-box;border:1px solid;border-color:#fff #404040 #404040 #fff;box-shadow:inset -1px -1px 0 #808080, inset 1px 1px 0 #d4d0c8;"><div style="position:absolute;left:3px;top:1px;width:9px;height:2px;background:#000;"></div><div style="position:absolute;left:3px;top:2px;width:1px;height:9px;background:#000;"></div><div style="position:absolute;left:11px;top:2px;width:1px;height:9px;background:#000;"></div><div style="position:absolute;left:3px;top:10px;width:9px;height:1px;background:#000;"></div></div><div style="position:absolute;left:971px;top:231px;width:16px;height:14px;background:#d4d0c8;box-sizing:border-box;border:1px solid;border-color:#fff #404040 #404040 #fff;box-shadow:inset -1px -1px 0 #808080, inset 1px 1px 0 #d4d0c8;"><svg style="position:absolute;left:3px;top:2px" width="9" height="8" viewBox="0 0 8 8"><path d="M.5 .5l7 7M7.500 .5l-7 7" stroke="#000" stroke-width="1.700" fill="none"/></svg></div><div style="position:absolute;left:43px;top:248px;width:946px;height:1px;background:#808080;"></div><div style="position:absolute;left:43px;top:249px;width:946px;height:1px;background:#fff;"></div><div style="position:absolute;left:43px;top:248px;width:1px;height:82px;background:#808080;"></div><div style="position:absolute;left:44px;top:249px;width:1px;height:81px;background:#fff;"></div><span id="t42" style="position:absolute;left:52px;top:255px;font:normal 11px/12px 'Liberation Sans', sans-serif;color:#000;white-space:pre;letter-spacing:-0.245px;">File</span><span id="t43" style="position:absolute;left:84px;top:255px;font:normal 11px/12px 'Liberation Sans', sans-serif;color:#000;white-space:pre;letter-spacing:0.010px;">Edit</span><span id="t44" style="position:absolute;left:119px;top:255px;font:normal 11px/12px 'Liberation Sans', sans-serif;color:#000;white-space:pre;letter-spacing:-0.219px;">View</span><span id="t45" style="position:absolute;left:156px;top:255px;font:normal 11px/12px 'Liberation Sans', sans-serif;color:#000;white-space:pre;letter-spacing:0.219px;">Favorites</span><span id="t46" style="position:absolute;left:218px;top:255px;font:normal 11px/12px 'Liberation Sans', sans-serif;color:#000;white-space:pre;letter-spacing:-0.172px;">Tools</span><span id="t47" style="position:absolute;left:258px;top:255px;font:normal 11px/12px 'Liberation Sans', sans-serif;color:#000;white-space:pre;letter-spacing:0.125px;">Help</span><div style="position:absolute;left:947px;top:249px;width:1px;height:23px;background:#808080;"></div><div style="position:absolute;left:948px;top:250px;width:40px;height:22px;background:#fff;"></div><svg style="position:absolute;left:957px;top:251px" width="22" height="20" viewBox="0 0 22 20">
<path d="M3.500 3.500c3-2 5-1.500 7.500 0l-2 6c-2.500-1.500-4.500-2-7.500 0z" fill="#f0603a"/>
<path d="M12 4c2.500 1.500 5 1.800 8 0l-2 6c-3 1.800-5.500 1.500-8 0z" fill="#7cc04a"/>
<path d="M1.200 10.500c3-2 5-1.500 7.500 0l-2 6c-2.500-1.500-4.500-2-7.500 0z" fill="#4a8ae8" transform="translate(0 0)"/>
<path d="M9.700 11c2.500 1.500 5 1.800 8 0l-2 6c-3 1.800-5.500 1.500-8 0z" fill="#f8c838"/>
</svg><div style="position:absolute;left:43px;top:272px;width:904px;height:1px;background:#808080;"></div><div style="position:absolute;left:44px;top:273px;width:945px;height:1px;background:#fff;"></div><svg style="position:absolute;left:48px;top:277px" width="24" height="24" viewBox="0 0 24 24">
<defs><radialGradient id="g18" cx=".4" cy=".3" r=".8"><stop offset="0" stop-color="#e6e6e6"/><stop offset=".55" stop-color="#b4b4b4"/><stop offset="1" stop-color="#9a9a9a"/></radialGradient></defs>
<circle cx="12" cy="12" r="11.2" fill="url(#g18)" stroke="#9a9a9a" stroke-width=".8"/>
<g><path d="M5.2 12l6.4-6.2 1.9 1.9-3 3H19v2.6h-8.5l3 3-1.9 1.9z" fill="#f4f4f4" stroke="#9a9a9a" stroke-width=".5"/></g>
</svg><span id="t48" style="position:absolute;left:76px;top:283px;font:normal 11px/12px 'Liberation Sans', sans-serif;color:#808080;white-space:pre;letter-spacing:-0.490px;text-shadow:1px 1px 0 #fff;">Back</span><div style="position:absolute;left:107px;top:288px;width:5px;height:1px;background:#808080;"></div><div style="position:absolute;left:108px;top:289px;width:3px;height:1px;background:#808080;"></div><div style="position:absolute;left:109px;top:290px;width:1px;height:1px;background:#808080;"></div><svg style="position:absolute;left:120px;top:277px" width="24" height="24" viewBox="0 0 24 24">
<defs><radialGradient id="g19" cx=".4" cy=".3" r=".8"><stop offset="0" stop-color="#e6e6e6"/><stop offset=".55" stop-color="#b4b4b4"/><stop offset="1" stop-color="#9a9a9a"/></radialGradient></defs>
<circle cx="12" cy="12" r="11.2" fill="url(#g19)" stroke="#9a9a9a" stroke-width=".8"/>
<g transform="translate(24 0) scale(-1 1)"><path d="M5.2 12l6.4-6.2 1.9 1.9-3 3H19v2.6h-8.5l3 3-1.9 1.9z" fill="#f4f4f4" stroke="#9a9a9a" stroke-width=".5"/></g>
</svg><div style="position:absolute;left:152px;top:288px;width:5px;height:1px;background:#808080;"></div><div style="position:absolute;left:153px;top:289px;width:3px;height:1px;background:#808080;"></div><div style="position:absolute;left:154px;top:290px;width:1px;height:1px;background:#808080;"></div><svg style="position:absolute;left:168px;top:277px" width="19" height="23" viewBox="0 0 19 23"><defs><linearGradient id="g20" x1="0" y1="0" x2="1" y2="1"><stop offset="0" stop-color="#ffffff"/><stop offset=".5" stop-color="#f0f5ff"/><stop offset="1" stop-color="#c9d8f8"/></linearGradient></defs>
<path d="M.5 .5h13l5 5v17h-18z" fill="url(#g20)" stroke="#7f8fcf" stroke-width="1"/>
<path d="M13.500 .5v5h5z" fill="#9db4ee" stroke="#7f8fcf" stroke-width=".8"/>
<path d="M18.500 6v16.500H1" fill="none" stroke="#5c68b0" stroke-width="1"/><path d="M5.500 8.500l7 7M12.500 8.500l-7 7" stroke="#f43a17" stroke-width="2.800"/></svg><svg style="position:absolute;left:200px;top:277px" width="19" height="23" viewBox="0 0 19 23"><defs><linearGradient id="g21" x1="0" y1="0" x2="1" y2="1"><stop offset="0" stop-color="#ffffff"/><stop offset=".5" stop-color="#f0f5ff"/><stop offset="1" stop-color="#c9d8f8"/></linearGradient></defs>
<path d="M.5 .5h13l5 5v17h-18z" fill="url(#g21)" stroke="#7f8fcf" stroke-width="1"/>
<path d="M13.500 .5v5h5z" fill="#9db4ee" stroke="#7f8fcf" stroke-width=".8"/>
<path d="M18.500 6v16.500H1" fill="none" stroke="#5c68b0" stroke-width="1"/>
<path d="M4.700 11a4.800 4.800 0 0 1 8-3" fill="none" stroke="#169a26" stroke-width="2.600"/>
<path d="M14.800 4.800v5.600h-5.600z" fill="#169a26"/>
<path d="M14.300 13a4.800 4.800 0 0 1-8 3" fill="none" stroke="#169a26" stroke-width="2.600"/>
<path d="M4.200 19.200v-5.600h5.600z" fill="#169a26"/>
</svg><svg style="position:absolute;left:229px;top:276px" width="24" height="24" viewBox="0 0 24 24">
<defs><linearGradient id="g22" x1="0" y1="0" x2="1" y2="1"><stop offset="0" stop-color="#f9c565"/><stop offset="1" stop-color="#ee9a2a"/></linearGradient>
<linearGradient id="g23" x1="0" y1="0" x2="0" y2="1"><stop offset="0" stop-color="#ffffff"/><stop offset="1" stop-color="#d4dcf4"/></linearGradient></defs>
<path d="M14.800 .8h2.800v5l-2.800-1.500z" fill="#c63a20" stroke="#8a2410" stroke-width=".5"/>
<path d="M1.500 10.500L8 12.500l.5 11L2 19.500z" fill="#7fa6ea" stroke="#5a80cc" stroke-width=".6"/>
<path d="M8 12l7.500-6.500 7 7-1.500.8v7.500L8.500 23.500z" fill="url(#g23)" stroke="#8b9ad0" stroke-width=".7"/>
<path d="M.8 9.500L9 2.300l6.700 2.900L7.600 12.300z" fill="url(#g22)" stroke="#d98a1c" stroke-width=".6"/>
<path d="M15.500 4.800l7.700 7.700-1.200 1-6.600-6.600-7.400 6.200-.6-1z" fill="#fbfbff" stroke="#a3acd8" stroke-width=".5"/>
<path d="M13.500 13.800l3.600-.8v8.300l-3.600 1z" fill="#6f76b4" stroke="#565c9c" stroke-width=".5"/>
</svg><div style="position:absolute;left:259px;top:276px;width:1px;height:26px;background:#808080;"></div><div style="position:absolute;left:260px;top:276px;width:1px;height:26px;background:#fff;"></div><svg style="position:absolute;left:266px;top:277px" width="24" height="24" viewBox="0 0 24 24">
<defs><radialGradient id="g24" cx=".4" cy=".35" r=".75"><stop offset="0" stop-color="#ffffff"/><stop offset=".55" stop-color="#e4f1ff"/><stop offset="1" stop-color="#b5d4f8"/></radialGradient></defs>
<path d="M9.500 14.500L2.500 22" stroke="#c47e22" stroke-width="3.400" stroke-linecap="round"/>
<path d="M9.300 14.300L2.300 21.800" stroke="#f6c070" stroke-width="1.400" stroke-linecap="round"/>
<circle cx="15" cy="8.800" r="7.300" fill="url(#g24)" stroke="#a3b4e6" stroke-width="1.600"/>
<path d="M10.500 6.500a5 5 0 0 1 5-3" fill="none" stroke="#ffffff" stroke-width="1.400" stroke-linecap="round"/>
</svg><span id="t49" style="position:absolute;left:293px;top:283px;font:normal 11px/12px 'Liberation Sans', sans-serif;color:#000;white-space:pre;letter-spacing:-0.172px;">Search</span><svg style="position:absolute;left:337.5px;top:276px" width="25" height="24" viewBox="0 0 25 24">
<defs><linearGradient id="g25" x1="0" y1="0" x2="1" y2="1"><stop offset="0" stop-color="#fffcc0"/><stop offset=".55" stop-color="#fbe248"/><stop offset="1" stop-color="#e6a40c"/></linearGradient></defs>
<path d="M12.500 2l3 6.800 7.500 .7-5.700 5 1.800 7.300-6.600-4-6.600 4 1.800-7.300L2 9.500l7.500-.7z" fill="url(#g25)" stroke="#c8900e" stroke-width="2.200" stroke-linejoin="round"/>
<path d="M12.500 2l3 6.800 7.500 .7-5.700 5 1.800 7.300-6.600-4-6.600 4 1.800-7.300L2 9.500l7.500-.7z" fill="url(#g25)" stroke="#f4d23c" stroke-width=".9" stroke-linejoin="round"/>
</svg><span id="t50" style="position:absolute;left:365px;top:283px;font:normal 11px/12px 'Liberation Sans', sans-serif;color:#000;white-space:pre;letter-spacing:0.094px;">Favorites</span><svg style="position:absolute;left:422px;top:277px" width="25" height="24" viewBox="0 0 25 24">
<defs><radialGradient id="g26" cx=".45" cy=".4" r=".7"><stop offset="0" stop-color="#ffffff"/><stop offset="1" stop-color="#bcd4ee"/></radialGradient></defs>
<circle cx="14.500" cy="12" r="9.600" fill="url(#g26)" stroke="#9a9cb4" stroke-width="1.800"/>
<path d="M14.500 12l4.600-3.600" stroke="#3a4048" stroke-width="1.400"/><path d="M14.500 12h3" stroke="#3a4048" stroke-width="1"/>
<circle cx="22" cy="12" r=".9" fill="#e8482a"/><circle cx="14.500" cy="19.500" r=".9" fill="#e8482a"/>
<path d="M17 3.600A8.800 8.800 0 0 0 5.800 11.500" fill="none" stroke="#12781a" stroke-width="5"/>
<path d="M17 3.600A8.800 8.800 0 0 0 5.800 11.500" fill="none" stroke="#3cb63c" stroke-width="3.600"/>
<path d="M.8 10.500h10.800L6.200 18.500z" fill="#3cb63c" stroke="#12781a" stroke-width=".9" stroke-linejoin="round"/>
</svg><div style="position:absolute;left:453px;top:276px;width:1px;height:26px;background:#808080;"></div><div style="position:absolute;left:454px;top:276px;width:1px;height:26px;background:#fff;"></div><svg style="position:absolute;left:462px;top:276.5px" width="23" height="24" viewBox="0 0 23 24"><g transform="matrix(1 -.12 .1 1 -1.500 2)">
<path d="M1.500 9.500L11.500 1.500l9.500 8v12.500h-19.500z" fill="#c4e0fb" stroke="#8f96d4" stroke-width="1"/>
<path d="M4.500 8.500l7-5.500 6.500 5.500v6h-13.500z" fill="#fff8e4" stroke="#e0b060" stroke-width=".7"/>
<path d="M5 8.300l6.500-5L17.500 8.300c-4-1.500-8.500-1.500-12.500 0z" fill="#f4b454"/>
<path d="M1.500 9.500l10 8 9.500-8v12.500h-19.500z" fill="#b4d8fa" stroke="#8f96d4" stroke-width="1"/>
<path d="M1.500 22l8.300-7.600M21 22l-7.800-7.600" stroke="#8f96d4" stroke-width=".9"/></g>
</svg><div style="position:absolute;left:487px;top:288px;width:5px;height:1px;background:#000;"></div><div style="position:absolute;left:488px;top:289px;width:3px;height:1px;background:#000;"></div><div style="position:absolute;left:489px;top:290px;width:1px;height:1px;background:#000;"></div><svg style="position:absolute;left:500px;top:276px" width="24" height="24" viewBox="0 0 24 24">
<path d="M5 1l9-.5 2.500 9.500-9.500 1z" fill="#d8e8ff" stroke="#8aa4dc" stroke-width=".8"/>
<path d="M6.500 2.500l6.500-.4 2 7-7 .7z" fill="#a9c9fa"/>
<path d="M2.500 13.500l5-4 11.500-1 3.500 4.500z" fill="#f4f4f4" stroke="#9a9a9a" stroke-width=".7"/>
<path d="M7.500 11.500l9-.8 1.500 1.800-9.500 1z" fill="#d0d0d0"/>
<path d="M2.500 13.500l20-.5v5.500l-9 4.500-11-3.500z" fill="#e9e9e9" stroke="#8c8c8c" stroke-width=".7"/>
<path d="M13.500 18.500l9-4.500v4.500l-9 4.500z" fill="#bdbdbd" stroke="#7c7c7c" stroke-width=".6"/>
<path d="M14.500 20.500l6.500-3.200" stroke="#4c4c4c" stroke-width="1.600"/>
<circle cx="20.500" cy="15" r=".9" fill="#3cc43c"/>
</svg><svg style="position:absolute;left:536px;top:281px" width="16" height="16" viewBox="0 0 16 16">
<rect x=".5" y=".5" width="15" height="15" fill="#ececec" stroke="#b0b0b0"/>
<path d="M1 15.500h14.500V1" fill="none" stroke="#7a7a7a" stroke-width="1"/>
<path d="M1.500 14.500v-13h13" fill="none" stroke="#ffffff" stroke-width="1"/>
<text x="8.500" y="12.500" text-anchor="middle" font-family="Liberation Sans, sans-serif" font-weight="bold" font-style="italic" font-size="12" fill="#ffffff">W</text>
<text x="8" y="12" text-anchor="middle" font-family="Liberation Sans, sans-serif" font-weight="bold" font-style="italic" font-size="12" fill="#8a8a8a">W</text>
</svg><div style="position:absolute;left:564px;top:288px;width:5px;height:1px;background:#000;"></div><div style="position:absolute;left:565px;top:289px;width:3px;height:1px;background:#000;"></div><div style="position:absolute;left:566px;top:290px;width:1px;height:1px;background:#000;"></div><svg style="position:absolute;left:578px;top:277px" width="23" height="23" viewBox="0 0 23 23">
<defs><linearGradient id="g27" x1="0" y1="0" x2=".3" y2="1"><stop offset="0" stop-color="#fff8a0"/><stop offset="1" stop-color="#fde060"/></linearGradient></defs>
<path d="M1 1h21v15l-5.500 6H1z" fill="url(#g27)" stroke="#d8a020" stroke-width="1.200"/>
<path d="M22 16h-5.500v6" fill="#fff4b0" stroke="#d8a020" stroke-width="1"/>
</svg><svg style="position:absolute;left:608px;top:277px" width="24" height="23" viewBox="0 0 24 23">
<path d="M1.500 4.500l4-3h5v19h-9z" fill="#6a6cc8" stroke="#4044a0" stroke-width=".8"/>
<path d="M5.500 1.500l3-1 2 1z" fill="#e8e8f8"/>
<path d="M2.500 16h4M2.500 18h4" stroke="#a8aaf0" stroke-width=".9"/>
<path d="M10.500 4l3.500-3h6v19h-9.500z" fill="#d8b060" stroke="#a07828" stroke-width=".8"/>
<path d="M14 1l2.500-.8 2.500.8z" fill="#f4f0e0"/>
<path d="M16 14l6 6.500" stroke="#c89030" stroke-width="2.600" stroke-linecap="round"/>
<circle cx="13" cy="12" r="4.800" fill="#d8ecfc" stroke="#7898c8" stroke-width="1.400"/>
</svg><svg style="position:absolute;left:641px;top:277px" width="25" height="24" viewBox="0 0 25 24">
<defs><radialGradient id="g28" cx=".4" cy=".3" r=".8"><stop offset="0" stop-color="#c8f0d0"/><stop offset=".5" stop-color="#48a888"/><stop offset="1" stop-color="#205890"/></radialGradient>
<radialGradient id="g29" cx=".4" cy=".3" r=".8"><stop offset="0" stop-color="#ffffff"/><stop offset=".6" stop-color="#a8d0f0"/><stop offset="1" stop-color="#5890d0"/></radialGradient></defs>
<circle cx="7" cy="6.500" r="3.200" fill="url(#g29)"/>
<path d="M1 17c0-6 3-7.500 6-7.500s5 1.500 5.500 7.500z" fill="url(#g29)"/>
<circle cx="15.500" cy="7" r="4.600" fill="url(#g28)"/>
<path d="M6.500 21c0-7 4-9.500 9-9.500s9 2.500 9 9.500c-5 2.500-13 2.500-18 0z" fill="url(#g28)"/>
</svg><div style="position:absolute;left:43px;top:304px;width:946px;height:1px;background:#808080;"></div><div style="position:absolute;left:44px;top:305px;width:945px;height:1px;background:#fff;"></div><span id="t51" style="position:absolute;left:49px;top:311px;font:normal 11px/12px 'Liberation Sans', sans-serif;color:#000;white-space:pre;letter-spacing:-0.227px;">Address</span><div style="position:absolute;left:92px;top:306px;width:736px;height:22px;background:#fff;box-sizing:border-box;border:1px solid;border-color:#808080 #fff #fff #808080;box-shadow:inset 1px 1px 0 #404040, inset -1px -1px 0 #d4d0c8;"></div><svg style="position:absolute;left:95px;top:309px" width="16" height="16" viewBox="0 0 16 16">
<defs><linearGradient id="g30" x1="0" y1="0" x2="1" y2="1"><stop offset="0" stop-color="#ffffff"/><stop offset="1" stop-color="#d9def6"/></linearGradient></defs>
<path d="M4.500 .5h8l3 3v12h-11z" fill="url(#g30)" stroke="#8088b8" stroke-width="1"/>
<path d="M12.500 .5v3h3" fill="#eef0ff" stroke="#6870b4" stroke-width=".8"/>
<path d="M15.500 4v11.500h-10.500" fill="none" stroke="#50549a" stroke-width="1"/>
<path d="M2.800 8.800h7.400c.2-2.300-1.300-3.700-3.500-3.700-2.300 0-3.800 1.500-3.800 3.700 0 2.200 1.600 3.700 3.900 3.700 1.600 0 2.700-.6 3.300-1.900" fill="none" stroke="#2480e2" stroke-width="2.200"/>
<path d="M3.200 7.300c.8-1.600 2.400-2.300 4-1.900" fill="none" stroke="#4cb4f6" stroke-width=".9"/>
<path d="M1.300 13.200C0 10.300 3.500 5.300 10 3.600c1.700-.4 2 .3 1.400 1.200" fill="none" stroke="#3e9cec" stroke-width=".9" stroke-dasharray="2.500 .6"/>
</svg><span id="t52" style="position:absolute;left:114px;top:312px;font:normal 11px/12px 'Liberation Sans', sans-serif;color:#000;white-space:pre;letter-spacing:0.098px;">http://72.29.23.34/ReportingApplication/displayLM.aspx?projectid=1316&amp;staten=IL&amp;yearn=2006</span><div style="position:absolute;left:813px;top:308px;width:15px;height:18px;background:#d4d0c8;box-sizing:border-box;border:1px solid;border-color:#fff #404040 #404040 #fff;box-shadow:inset -1px -1px 0 #808080, inset 1px 1px 0 #d4d0c8;"><div style="position:absolute;left:4px;top:6px;width:5px;height:1px;background:#000;"></div><div style="position:absolute;left:5px;top:7px;width:3px;height:1px;background:#000;"></div><div style="position:absolute;left:6px;top:8px;width:1px;height:1px;background:#000;"></div></div><svg style="position:absolute;left:835px;top:307px" width="19" height="19" viewBox="0 0 18 18">
<defs><linearGradient id="g31" x1="0" y1="0" x2="0" y2="1"><stop offset="0" stop-color="#48c048"/><stop offset="1" stop-color="#108018"/></linearGradient></defs>
<rect x=".5" y=".5" width="17" height="17" rx="2" fill="url(#g31)" stroke="#8fd88f" stroke-width="1"/>
<path d="M3.500 9h10M9.500 4.500L14 9l-4.500 4.500" fill="none" stroke="#fff" stroke-width="2.200"/>
</svg><span id="t53" style="position:absolute;left:859px;top:311px;font:normal 11px/12px 'Liberation Sans', sans-serif;color:#000;white-space:pre;letter-spacing:-0.688px;">Go</span><div style="position:absolute;left:887px;top:307px;width:1px;height:22px;background:#808080;"></div><div style="position:absolute;left:888px;top:307px;width:1px;height:22px;background:#fff;"></div><span id="t54" style="position:absolute;left:893px;top:311px;font:normal 11px/12px 'Liberation Sans', sans-serif;color:#000;white-space:pre;letter-spacing:-0.672px;">Links</span><span id="t55" style="position:absolute;left:923px;top:305px;font:bold 13px/15px 'Liberation Sans', sans-serif;color:#000;white-space:pre;">»</span><div style="position:absolute;left:936px;top:307px;width:1px;height:22px;background:#808080;"></div><div style="position:absolute;left:937px;top:307px;width:1px;height:22px;background:#fff;"></div><svg style="position:absolute;left:941px;top:308px" width="18" height="18" viewBox="0 0 18 18">
<circle cx="6" cy="6" r="5.500" fill="#4890e0" stroke="#2860b0" stroke-width=".6"/>
<path d="M3 4c2-2 5-1 5 1s-3 1-3 3" fill="none" stroke="#70d060" stroke-width="1.400"/>
<path d="M6.500 4.500h7l3 3V17.500h-10z" fill="#fcfcfc" stroke="#909090" stroke-width=".8"/>
<path d="M3.500 6.500h8v3.500h-8z" fill="#d82020"/>
<path d="M8 16c2-2 3.500-5 3-7-.5-1-1.500 0-1 1.500 1 3 3 4.500 5.500 4.500-2-.8-5.500 0-7.500 1z" fill="none" stroke="#e02020" stroke-width="1.100"/>
</svg><div style="position:absolute;left:965px;top:317px;width:5px;height:1px;background:#000;"></div><div style="position:absolute;left:966px;top:318px;width:3px;height:1px;background:#000;"></div><div style="position:absolute;left:967px;top:319px;width:1px;height:1px;background:#000;"></div><div style="position:absolute;left:43px;top:329px;width:946px;height:1px;background:#808080;"></div><div style="position:absolute;left:43px;top:330px;width:946px;height:1px;background:#fff;"></div><div style="position:absolute;left:43px;top:331px;width:946px;height:1px;background:#808080;"></div><div style="position:absolute;left:44px;top:332px;width:944px;height:1px;background:#404040;"></div><div style="position:absolute;left:43px;top:331px;width:1px;height:450px;background:#808080;"></div><div style="position:absolute;left:44px;top:332px;width:1px;height:450px;background:#404040;"></div><div style="position:absolute;left:987px;top:331px;width:1px;height:450px;background:#d4d0c8;"></div><div style="position:absolute;left:988px;top:331px;width:1px;height:450px;background:#fff;"></div><div style="position:absolute;left:45px;top:333px;width:926px;height:440px;background:#fff;"></div><div class="dith" style="left:971px;top:333px;width:16px;height:440px"></div><div style="position:absolute;left:971px;top:333px;width:16px;height:16px;background:#d4d0c8;box-sizing:border-box;border:1px solid;border-color:#fff #404040 #404040 #fff;box-shadow:inset -1px -1px 0 #808080, inset 1px 1px 0 #d4d0c8;"><div style="position:absolute;left:7px;top:5px;width:1px;height:1px;background:#000;"></div><div style="position:absolute;left:6px;top:6px;width:3px;height:1px;background:#000;"></div><div style="position:absolute;left:5px;top:7px;width:5px;height:1px;background:#000;"></div><div style="position:absolute;left:4px;top:8px;width:7px;height:1px;background:#000;"></div></div><div style="position:absolute;left:971px;top:349px;width:16px;height:104px;background:#d4d0c8;box-sizing:border-box;border:1px solid;border-color:#fff #404040 #404040 #fff;box-shadow:inset -1px -1px 0 #808080, inset 1px 1px 0 #d4d0c8;"></div><span id="t56" style="position:absolute;left:56px;top:349px;font:bold 32px/36px 'Liberation Serif', serif;color:#000;white-space:pre;letter-spacing:0.094px;">Logic Model for IL (project started in 2006)</span><span id="t57" style="position:absolute;left:56px;top:422px;font:bold 24px/26px 'Liberation Serif', serif;color:#000;white-space:pre;letter-spacing:-0.078px;">Top</span><div style="position:absolute;left:55px;top:486px;width:907px;height:300px;background:transparent;box-sizing:border-box;border:1px solid;border-color:#d4d0c8 #808080 #808080 #d4d0c8;"></div><div style="position:absolute;left:58px;top:489px;width:210px;height:23px;background:transparent;box-sizing:border-box;border:1px solid;border-color:#808080 #d4d0c8 #d4d0c8 #808080;"></div><div style="position:absolute;left:58px;top:514px;width:210px;height:300px;background:transparent;box-sizing:border-box;border:1px solid;border-color:#808080 #d4d0c8 #d4d0c8 #808080;"></div><span id="t58" style="position:absolute;left:60px;top:492px;font:bold 16px/17px 'Liberation Serif', serif;color:#000;white-space:pre;letter-spacing:0.016px;word-spacing:-0.016px;">Identified Needs and Assets</span><span id="t59" style="position:absolute;left:60px;top:517px;font:bold 16px/17px 'Liberation Serif', serif;color:#000;white-space:pre;letter-spacing:0.402px;word-spacing:-0.402px;">Needs</span><span id="t60" style="position:absolute;left:60px;top:536px;font:normal 16px/17px 'Liberation Serif', serif;color:#000;white-space:pre;letter-spacing:-0.598px;word-spacing:0.598px;">The early years can be difficult for</span><span id="t61" style="position:absolute;left:60px;top:555px;font:normal 16px/17px 'Liberation Serif', serif;color:#000;white-space:pre;letter-spacing:-0.503px;word-spacing:0.503px;">parents and wish they had more</span><span id="t62" style="position:absolute;left:60px;top:574px;font:normal 16px/17px 'Liberation Serif', serif;color:#000;white-space:pre;letter-spacing:-0.616px;word-spacing:0.616px;">information and advice to help</span><span id="t63" style="position:absolute;left:60px;top:593px;font:normal 16px/17px 'Liberation Serif', serif;color:#000;white-space:pre;letter-spacing:-0.865px;word-spacing:0.865px;">them with challenging</span><span id="t64" style="position:absolute;left:60px;top:612px;font:normal 16px/17px 'Liberation Serif', serif;color:#000;white-space:pre;letter-spacing:-0.528px;word-spacing:0.528px;">developmental issues (Young,</span><span id="t65" style="position:absolute;left:60px;top:631px;font:normal 16px/17px 'Liberation Serif', serif;color:#000;white-space:pre;letter-spacing:-0.335px;word-spacing:0.335px;">Davis &amp; Schoen, 1996)</span><span id="t66" style="position:absolute;left:60px;top:669px;font:normal 16px/17px 'Liberation Serif', serif;color:#000;white-space:pre;letter-spacing:-0.586px;word-spacing:0.586px;">Parents want specific information</span><span id="t67" style="position:absolute;left:60px;top:688px;font:normal 16px/17px 'Liberation Serif', serif;color:#000;white-space:pre;letter-spacing:-0.474px;word-spacing:0.474px;">about what they can do to help</span><span id="t68" style="position:absolute;left:60px;top:707px;font:normal 16px/17px 'Liberation Serif', serif;color:#000;white-space:pre;letter-spacing:-0.605px;word-spacing:0.605px;">their child, but time is a barrier to</span><span id="t69" style="position:absolute;left:60px;top:726px;font:normal 16px/17px 'Liberation Serif', serif;color:#000;white-space:pre;letter-spacing:-0.689px;word-spacing:0.689px;">receive this information (Melmed,</span><div style="position:absolute;left:270px;top:489px;width:164px;height:23px;background:transparent;box-sizing:border-box;border:1px solid;border-color:#808080 #d4d0c8 #d4d0c8 #808080;"></div><div style="position:absolute;left:270px;top:514px;width:164px;height:300px;background:transparent;box-sizing:border-box;border:1px solid;border-color:#808080 #d4d0c8 #d4d0c8 #808080;"></div><span id="t70" style="position:absolute;left:272px;top:492px;font:bold 16px/17px 'Liberation Serif', serif;color:#000;white-space:pre;letter-spacing:0.121px;word-spacing:-0.121px;">Desired Results</span><span id="t71" style="position:absolute;left:272px;top:517px;font:bold 16px/17px 'Liberation Serif', serif;color:#000;white-space:pre;letter-spacing:-0.271px;word-spacing:0.271px;">Short Term</span><span id="t72" style="position:absolute;left:272px;top:536px;font:normal 16px/17px 'Liberation Serif', serif;color:#000;white-space:pre;letter-spacing:-0.342px;word-spacing:0.342px;">1. Parents/grandparents</span><span id="t73" style="position:absolute;left:272px;top:555px;font:normal 16px/17px 'Liberation Serif', serif;color:#000;white-space:pre;letter-spacing:-0.583px;word-spacing:0.583px;">will increase knowledge of</span><span id="t74" style="position:absolute;left:272px;top:574px;font:normal 16px/17px 'Liberation Serif', serif;color:#000;white-space:pre;letter-spacing:-0.665px;word-spacing:0.665px;">child development.</span><span id="t75" style="position:absolute;left:272px;top:612px;font:normal 16px/17px 'Liberation Serif', serif;color:#000;white-space:pre;letter-spacing:-0.348px;word-spacing:0.348px;">2. Parent/grandparents</span><span id="t76" style="position:absolute;left:272px;top:631px;font:normal 16px/17px 'Liberation Serif', serif;color:#000;white-space:pre;letter-spacing:-0.727px;word-spacing:0.727px;">will increase their</span><span id="t77" style="position:absolute;left:272px;top:650px;font:normal 16px/17px 'Liberation Serif', serif;color:#000;white-space:pre;letter-spacing:-0.523px;word-spacing:0.523px;">confidence and</span><span id="t78" style="position:absolute;left:272px;top:669px;font:normal 16px/17px 'Liberation Serif', serif;color:#000;white-space:pre;letter-spacing:-0.687px;word-spacing:0.687px;">competence in functioning</span><span id="t79" style="position:absolute;left:272px;top:688px;font:normal 16px/17px 'Liberation Serif', serif;color:#000;white-space:pre;letter-spacing:-0.434px;word-spacing:0.434px;">as a parent.</span><span id="t80" style="position:absolute;left:272px;top:726px;font:normal 16px/17px 'Liberation Serif', serif;color:#000;white-space:pre;letter-spacing:-0.342px;word-spacing:0.342px;">3. Parents/grandparents</span><div style="position:absolute;left:436px;top:489px;width:180px;height:23px;background:transparent;box-sizing:border-box;border:1px solid;border-color:#808080 #d4d0c8 #d4d0c8 #808080;"></div><div style="position:absolute;left:436px;top:514px;width:180px;height:300px;background:transparent;box-sizing:border-box;border:1px solid;border-color:#808080 #d4d0c8 #d4d0c8 #808080;"></div><span id="t81" style="position:absolute;left:438px;top:492px;font:bold 16px/17px 'Liberation Serif', serif;color:#000;white-space:pre;letter-spacing:-0.359px;word-spacing:0.359px;">Indicators</span><span id="t82" style="position:absolute;left:438px;top:517px;font:bold 16px/17px 'Liberation Serif', serif;color:#000;white-space:pre;letter-spacing:-0.271px;word-spacing:0.271px;">Short Term</span><span id="t83" style="position:absolute;left:438px;top:536px;font:normal 16px/17px 'Liberation Serif', serif;color:#000;white-space:pre;letter-spacing:-0.238px;word-spacing:0.238px;">1. Score on Knowledge of</span><span id="t84" style="position:absolute;left:438px;top:555px;font:normal 16px/17px 'Liberation Serif', serif;color:#000;white-space:pre;letter-spacing:-0.619px;word-spacing:0.619px;">Infant Development</span><span id="t85" style="position:absolute;left:438px;top:574px;font:normal 16px/17px 'Liberation Serif', serif;color:#000;white-space:pre;letter-spacing:-0.361px;word-spacing:0.361px;">Inventory (KIDI) (McPHee,</span><span id="t86" style="position:absolute;left:438px;top:593px;font:normal 16px/17px 'Liberation Serif', serif;color:#000;white-space:pre;letter-spacing:-0.051px;word-spacing:0.051px;">1981, 1983) or KCDI</span><span id="t87" style="position:absolute;left:438px;top:631px;font:normal 16px/17px 'Liberation Serif', serif;color:#000;white-space:pre;letter-spacing:-0.318px;word-spacing:0.318px;">2. Score on Parental Sense</span><span id="t88" style="position:absolute;left:438px;top:650px;font:normal 16px/17px 'Liberation Serif', serif;color:#000;white-space:pre;letter-spacing:-0.390px;word-spacing:0.390px;">of Comptence Scale</span><span id="t89" style="position:absolute;left:438px;top:669px;font:normal 16px/17px 'Liberation Serif', serif;color:#000;white-space:pre;letter-spacing:-0.256px;word-spacing:0.256px;">(PSOC) (Gibaud- Wallston,</span><span id="t90" style="position:absolute;left:438px;top:688px;font:normal 16px/17px 'Liberation Serif', serif;color:#000;white-space:pre;letter-spacing:-0.226px;word-spacing:0.226px;">&amp; Wandersman, 1978)</span><span id="t91" style="position:absolute;left:438px;top:726px;font:normal 16px/17px 'Liberation Serif', serif;color:#000;white-space:pre;letter-spacing:-0.400px;word-spacing:0.400px;">3. Score on a modified</span><div style="position:absolute;left:618px;top:489px;width:187px;height:23px;background:transparent;box-sizing:border-box;border:1px solid;border-color:#808080 #d4d0c8 #d4d0c8 #808080;"></div><div style="position:absolute;left:618px;top:514px;width:187px;height:300px;background:transparent;box-sizing:border-box;border:1px solid;border-color:#808080 #d4d0c8 #d4d0c8 #808080;"></div><span id="t92" style="position:absolute;left:620px;top:492px;font:bold 16px/17px 'Liberation Serif', serif;color:#000;white-space:pre;letter-spacing:-0.165px;word-spacing:0.165px;">Activities</span><span id="t93" style="position:absolute;left:620px;top:517px;font:normal 16px/17px 'Liberation Serif', serif;color:#000;white-space:pre;letter-spacing:-0.570px;word-spacing:0.570px;">1. • Identify distribution</span><span id="t94" style="position:absolute;left:620px;top:536px;font:normal 16px/17px 'Liberation Serif', serif;color:#000;white-space:pre;letter-spacing:-0.520px;word-spacing:0.520px;">system for delivery of</span><span id="t95" style="position:absolute;left:620px;top:555px;font:normal 16px/17px 'Liberation Serif', serif;color:#000;white-space:pre;letter-spacing:-0.378px;word-spacing:0.378px;">integrated newsletter. •</span><span id="t96" style="position:absolute;left:620px;top:574px;font:normal 16px/17px 'Liberation Serif', serif;color:#000;white-space:pre;letter-spacing:-0.410px;word-spacing:0.410px;">Develop client data base and</span><span id="t97" style="position:absolute;left:620px;top:593px;font:normal 16px/17px 'Liberation Serif', serif;color:#000;white-space:pre;letter-spacing:-0.413px;word-spacing:0.413px;">distribute age appropriate</span><span id="t98" style="position:absolute;left:620px;top:612px;font:normal 16px/17px 'Liberation Serif', serif;color:#000;white-space:pre;letter-spacing:-0.543px;word-spacing:0.543px;">newsletters • Provide training</span><span id="t99" style="position:absolute;left:620px;top:631px;font:normal 16px/17px 'Liberation Serif', serif;color:#000;white-space:pre;letter-spacing:-0.753px;word-spacing:0.753px;">to community coalition</span><span id="t100" style="position:absolute;left:620px;top:650px;font:normal 16px/17px 'Liberation Serif', serif;color:#000;white-space:pre;letter-spacing:-0.769px;word-spacing:0.769px;">members and staff on utilizing</span><span id="t101" style="position:absolute;left:620px;top:669px;font:normal 16px/17px 'Liberation Serif', serif;color:#000;white-space:pre;letter-spacing:-0.448px;word-spacing:0.448px;">the Parenting 24/7 website •</span><span id="t102" style="position:absolute;left:620px;top:688px;font:normal 16px/17px 'Liberation Serif', serif;color:#000;white-space:pre;letter-spacing:-0.566px;word-spacing:0.566px;">Deliver educational programs</span><span id="t103" style="position:absolute;left:620px;top:707px;font:normal 16px/17px 'Liberation Serif', serif;color:#000;white-space:pre;letter-spacing:-0.659px;word-spacing:0.659px;">utilizing the Your Young Child</span><span id="t104" style="position:absolute;left:620px;top:726px;font:normal 16px/17px 'Liberation Serif', serif;color:#000;white-space:pre;letter-spacing:-0.674px;word-spacing:0.674px;">curriculum and the Parenting</span><div style="position:absolute;left:807px;top:489px;width:152px;height:23px;background:transparent;box-sizing:border-box;border:1px solid;border-color:#808080 #d4d0c8 #d4d0c8 #808080;"></div><div style="position:absolute;left:807px;top:514px;width:152px;height:300px;background:transparent;box-sizing:border-box;border:1px solid;border-color:#808080 #d4d0c8 #d4d0c8 #808080;"></div><span id="t105" style="position:absolute;left:809px;top:492px;font:bold 16px/17px 'Liberation Serif', serif;color:#000;white-space:pre;letter-spacing:0.184px;word-spacing:-0.184px;">Resources</span><span id="t106" style="position:absolute;left:809px;top:517px;font:normal 16px/17px 'Liberation Serif', serif;color:#000;white-space:pre;letter-spacing:-0.241px;word-spacing:0.241px;">1. • Author and</span><span id="t107" style="position:absolute;left:809px;top:536px;font:normal 16px/17px 'Liberation Serif', serif;color:#000;white-space:pre;letter-spacing:-0.445px;word-spacing:0.445px;">developer of web site is</span><span id="t108" style="position:absolute;left:809px;top:555px;font:normal 16px/17px 'Liberation Serif', serif;color:#000;white-space:pre;letter-spacing:-0.189px;word-spacing:0.189px;">Co-project director and</span><span id="t109" style="position:absolute;left:809px;top:574px;font:normal 16px/17px 'Liberation Serif', serif;color:#000;white-space:pre;letter-spacing:-0.594px;word-spacing:0.594px;">will provide staff</span><span id="t110" style="position:absolute;left:809px;top:593px;font:normal 16px/17px 'Liberation Serif', serif;color:#000;white-space:pre;letter-spacing:-0.627px;word-spacing:0.627px;">training, development</span><span id="t111" style="position:absolute;left:809px;top:612px;font:normal 16px/17px 'Liberation Serif', serif;color:#000;white-space:pre;letter-spacing:-0.664px;word-spacing:0.664px;">and mentoring •</span><span id="t112" style="position:absolute;left:809px;top:631px;font:normal 16px/17px 'Liberation Serif', serif;color:#000;white-space:pre;letter-spacing:-0.184px;word-spacing:0.184px;">Research-based</span><span id="t113" style="position:absolute;left:809px;top:650px;font:normal 16px/17px 'Liberation Serif', serif;color:#000;white-space:pre;letter-spacing:-0.468px;word-spacing:0.468px;">newsletters and</span><span id="t114" style="position:absolute;left:809px;top:669px;font:normal 16px/17px 'Liberation Serif', serif;color:#000;white-space:pre;letter-spacing:-0.662px;word-spacing:0.662px;">curriculums • Mobile</span><span id="t115" style="position:absolute;left:809px;top:688px;font:normal 16px/17px 'Liberation Serif', serif;color:#000;white-space:pre;letter-spacing:-0.518px;word-spacing:0.518px;">computer labs</span><span id="t116" style="position:absolute;left:809px;top:707px;font:normal 16px/17px 'Liberation Serif', serif;color:#000;white-space:pre;letter-spacing:-0.545px;word-spacing:0.545px;">available • Technology</span><span id="t117" style="position:absolute;left:809px;top:726px;font:normal 16px/17px 'Liberation Serif', serif;color:#000;white-space:pre;letter-spacing:-0.655px;word-spacing:0.655px;">specialist available</span>
<div style="position:absolute;left:0px;top:740px;width:1024px;height:28px;background:#d4d0c8;"></div><div style="position:absolute;left:0px;top:740px;width:1024px;height:1px;background:#d4d0c8;"></div><div style="position:absolute;left:0px;top:741px;width:1024px;height:1px;background:#fff;"></div><div style="position:absolute;left:2px;top:744px;width:53px;height:22px;background:#d4d0c8;box-sizing:border-box;border:1px solid;border-color:#fff #404040 #404040 #fff;box-shadow:inset -1px -1px 0 #808080, inset 1px 1px 0 #d4d0c8;"></div><svg style="position:absolute;left:3.15px;top:746.5px" width="18.7" height="17" viewBox="0 0 22 20">
<path d="M3.500 3.500c3-2 5-1.500 7.500 0l-2 6c-2.500-1.500-4.500-2-7.500 0z" fill="#f0603a"/>
<path d="M12 4c2.500 1.500 5 1.800 8 0l-2 6c-3 1.800-5.500 1.500-8 0z" fill="#7cc04a"/>
<path d="M1.200 10.500c3-2 5-1.500 7.500 0l-2 6c-2.500-1.500-4.500-2-7.500 0z" fill="#4a8ae8" transform="translate(0 0)"/>
<path d="M9.700 11c2.500 1.500 5 1.800 8 0l-2 6c-3 1.800-5.500 1.500-8 0z" fill="#f8c838"/>
</svg><span id="t118" style="position:absolute;left:22px;top:749px;font:bold 11px/12px 'Liberation Sans', sans-serif;color:#000;white-space:pre;letter-spacing:0.984px;">Start</span><div style="position:absolute;left:61px;top:746px;width:3px;height:18px;background:#d4d0c8;box-sizing:border-box;border:1px solid;border-color:#fff #808080 #808080 #fff;"></div><div style="position:absolute;left:215px;top:746px;width:3px;height:18px;background:#d4d0c8;box-sizing:border-box;border:1px solid;border-color:#fff #808080 #808080 #fff;"></div><svg style="position:absolute;left:71px;top:747px" width="16" height="16" viewBox="0 0 16 16"><rect x=".5" y=".5" width="15" height="15" fill="#fbe3b0" stroke="#e8960c" stroke-width="1.400"/><circle cx="8" cy="8" r="4.500" fill="#fff8e8" stroke="#d88408" stroke-width="1.200"/><path d="M8 5v3.200h2.500" fill="none" stroke="#b06800" stroke-width="1"/></svg><svg style="position:absolute;left:94px;top:747px" width="17" height="16" viewBox="0 0 17 16"><rect x="1" y="1" width="13.500" height="13.500" rx="2.500" fill="#2f7ae0" stroke="#1450b0" stroke-width="1"/><rect x="3.500" y="3.500" width="8.500" height="8.500" rx="1" fill="#fff6dc"/><path d="M5 10.500l5.500-6 1.800 1.600-5.500 6-2.600 .8z" fill="#ffffff" stroke="#384878" stroke-width=".8"/><path d="M5 10.500l-.7 2.300 2.400-.8z" fill="#202020"/><circle cx="13.800" cy="5" r="1.500" fill="#e8481c"/></svg><svg style="position:absolute;left:117px;top:747px" width="16" height="16" viewBox="0 0 16 16">
<defs><linearGradient id="g32" x1="0" y1="0" x2="1" y2="1"><stop offset="0" stop-color="#ffffff"/><stop offset="1" stop-color="#d9def6"/></linearGradient></defs>
<path d="M4.500 .5h8l3 3v12h-11z" fill="url(#g32)" stroke="#8088b8" stroke-width="1"/>
<path d="M12.500 .5v3h3" fill="#eef0ff" stroke="#6870b4" stroke-width=".8"/>
<path d="M15.500 4v11.500h-10.500" fill="none" stroke="#50549a" stroke-width="1"/>
<path d="M2.800 8.800h7.400c.2-2.300-1.300-3.700-3.500-3.700-2.300 0-3.800 1.500-3.800 3.700 0 2.200 1.600 3.700 3.900 3.700 1.600 0 2.700-.6 3.300-1.900" fill="none" stroke="#2480e2" stroke-width="2.200"/>
<path d="M3.200 7.300c.8-1.600 2.400-2.300 4-1.900" fill="none" stroke="#4cb4f6" stroke-width=".9"/>
<path d="M1.300 13.200C0 10.300 3.500 5.300 10 3.600c1.700-.4 2 .3 1.400 1.200" fill="none" stroke="#3e9cec" stroke-width=".9" stroke-dasharray="2.500 .6"/>
</svg><svg style="position:absolute;left:140px;top:747px" width="16" height="16" viewBox="0 0 16 16">
<defs><linearGradient id="g33" x1="0" y1="0" x2="1" y2="1"><stop offset="0" stop-color="#ffffff"/><stop offset="1" stop-color="#d9def6"/></linearGradient></defs>
<path d="M4.500 .5h8l3 3v12h-11z" fill="url(#g33)" stroke="#8088b8" stroke-width="1"/>
<path d="M12.500 .5v3h3" fill="#eef0ff" stroke="#6870b4" stroke-width=".8"/>
<path d="M15.500 4v11.500h-10.500" fill="none" stroke="#50549a" stroke-width="1"/>
<path d="M2.800 8.800h7.400c.2-2.300-1.300-3.700-3.500-3.700-2.300 0-3.800 1.500-3.800 3.700 0 2.200 1.600 3.700 3.900 3.700 1.600 0 2.700-.6 3.300-1.900" fill="none" stroke="#2480e2" stroke-width="2.200"/>
<path d="M3.200 7.300c.8-1.600 2.400-2.300 4-1.900" fill="none" stroke="#4cb4f6" stroke-width=".9"/>
<path d="M1.300 13.200C0 10.300 3.500 5.300 10 3.600c1.700-.4 2 .3 1.400 1.200" fill="none" stroke="#3e9cec" stroke-width=".9" stroke-dasharray="2.500 .6"/>
</svg><svg style="position:absolute;left:163px;top:747px" width="17" height="16" viewBox="0 0 17 16"><circle cx="8.500" cy="8" r="7.500" fill="#f0f0f0" stroke="#707888" stroke-width=".8"/><path d="M8.500 .5a7.500 7.500 0 0 1 7.500 7.500h-7.500z" fill="#e86820"/><path d="M16 8a7.500 7.500 0 0 1-7.500 7.500V8z" fill="#58a838"/><path d="M8.500 15.500A7.500 7.500 0 0 1 1 8h7.500z" fill="#e8b820" opacity=".7"/><circle cx="8.500" cy="8" r="5.200" fill="#2848b0" stroke="#fff" stroke-width=".8"/><path d="M7 5.200v5.600L11.500 8z" fill="#fff"/></svg><svg style="position:absolute;left:186px;top:747px" width="18" height="17" viewBox="0 0 18 17"><path d="M3.800 9.200h10.400c.3-3.300-1.900-5.500-5-5.500-3.200 0-5.400 2.200-5.400 5.400 0 3.200 2.300 5.400 5.600 5.400 2.300 0 3.900-.9 4.700-2.800" fill="none" stroke="#2a8cec" stroke-width="3.200"/><path d="M4.500 7c1-2.300 3.400-3.300 5.800-2.700" fill="none" stroke="#7cd0fc" stroke-width="1.100"/><path d="M1.500 15.500C-.8 11 5 3.500 15.800 1.800c1.900-.2 2.200 .8 1 2.600" fill="none" stroke="#4cacf4" stroke-width="1.300"/></svg><div style="position:absolute;left:221px;top:744px;width:115px;height:22px;background:#d4d0c8;box-sizing:border-box;border:1px solid;border-color:#fff #404040 #404040 #fff;box-shadow:inset -1px -1px 0 #808080, inset 1px 1px 0 #d4d0c8;"></div><svg style="position:absolute;left:225px;top:747px" width="16" height="16" viewBox="0 0 16 16"><rect x=".5" y=".5" width="15" height="15" fill="#fbe3b0" stroke="#e8960c" stroke-width="1.400"/><circle cx="8" cy="8" r="4.500" fill="#fff8e8" stroke="#d88408" stroke-width="1.200"/><path d="M8 5v3.200h2.500" fill="none" stroke="#b06800" stroke-width="1"/></svg><span id="t119" style="position:absolute;left:245px;top:749px;font:normal 11px/12px 'Liberation Sans', sans-serif;color:#000;white-space:pre;letter-spacing:0.097px;">Inbox - Microso...</span><div style="position:absolute;left:339px;top:744px;width:115px;height:22px;background:#d4d0c8;box-sizing:border-box;border:1px solid;border-color:#fff #404040 #404040 #fff;box-shadow:inset -1px -1px 0 #808080, inset 1px 1px 0 #d4d0c8;"></div><svg style="position:absolute;left:343px;top:747px" width="16" height="16" viewBox="0 0 16 16"><path d="M1 3.500h5l1.500 1.500H14v8.500H1z" fill="#f8d870" stroke="#b89020" stroke-width=".9"/><path d="M1 13.500l2-6.500h12l-1.500 6.500z" fill="#fdeaa0" stroke="#b89020" stroke-width=".9"/></svg><span id="t120" style="position:absolute;left:363px;top:749px;font:normal 11px/12px 'Liberation Sans', sans-serif;color:#000;white-space:pre;letter-spacing:0.180px;">Cyfar</span><div style="position:absolute;left:457px;top:744px;width:115px;height:22px;background:#d4d0c8;box-sizing:border-box;border:1px solid;border-color:#fff #404040 #404040 #fff;box-shadow:inset -1px -1px 0 #808080, inset 1px 1px 0 #d4d0c8;"></div><svg style="position:absolute;left:461px;top:747px" width="16" height="16" viewBox="0 0 16 16">
<defs><linearGradient id="g34" x1="0" y1="0" x2="1" y2="1"><stop offset="0" stop-color="#ffffff"/><stop offset="1" stop-color="#d9def6"/></linearGradient></defs>
<path d="M4.500 .5h8l3 3v12h-11z" fill="url(#g34)" stroke="#8088b8" stroke-width="1"/>
<path d="M12.500 .5v3h3" fill="#eef0ff" stroke="#6870b4" stroke-width=".8"/>
<path d="M15.500 4v11.500h-10.500" fill="none" stroke="#50549a" stroke-width="1"/>
<path d="M2.800 8.800h7.400c.2-2.300-1.300-3.700-3.500-3.700-2.300 0-3.800 1.500-3.800 3.700 0 2.200 1.600 3.700 3.900 3.700 1.600 0 2.700-.6 3.300-1.900" fill="none" stroke="#2480e2" stroke-width="2.200"/>
<path d="M3.200 7.300c.8-1.600 2.400-2.300 4-1.900" fill="none" stroke="#4cb4f6" stroke-width=".9"/>
<path d="M1.300 13.200C0 10.300 3.500 5.300 10 3.600c1.700-.4 2 .3 1.400 1.200" fill="none" stroke="#3e9cec" stroke-width=".9" stroke-dasharray="2.500 .6"/>
</svg><span id="t121" style="position:absolute;left:481px;top:749px;font:normal 11px/12px 'Liberation Sans', sans-serif;color:#000;white-space:pre;letter-spacing:0.278px;">State Project: ...</span><div style="position:absolute;left:575px;top:744px;width:115px;height:22px;background:#d4d0c8;box-sizing:border-box;border:1px solid;border-color:#fff #404040 #404040 #fff;box-shadow:inset -1px -1px 0 #808080, inset 1px 1px 0 #d4d0c8;"></div><svg style="position:absolute;left:579px;top:747px" width="16" height="16" viewBox="0 0 16 16"><path d="M4.500 1.500h8l3 3v10.500h-11z" fill="#fff" stroke="#6878a8" stroke-width=".9"/><path d="M7 6h6M7 8h6M7 10h6M7 12h6" stroke="#8898c8" stroke-width=".8"/><rect x=".5" y="2.500" width="8" height="8" fill="#2a52b8" stroke="#183888" stroke-width=".6"/><text x="4.500" y="9.300" text-anchor="middle" font-family="Liberation Sans, sans-serif" font-weight="bold" font-size="7.500" fill="#fff">W</text></svg><span id="t122" style="position:absolute;left:599px;top:749px;font:normal 11px/12px 'Liberation Sans', sans-serif;color:#000;white-space:pre;letter-spacing:-0.051px;">Document1 - Mi...</span><div class="dith" style="left:693px;top:744px;width:115px;height:22px;box-sizing:border-box;border:1px solid;border-color:#404040 #fff #fff #404040;box-shadow:inset 1px 1px 0 #808080;"></div><svg style="position:absolute;left:698px;top:748px" width="16" height="16" viewBox="0 0 16 16">
<defs><linearGradient id="g35" x1="0" y1="0" x2="1" y2="1"><stop offset="0" stop-color="#ffffff"/><stop offset="1" stop-color="#d9def6"/></linearGradient></defs>
<path d="M4.500 .5h8l3 3v12h-11z" fill="url(#g35)" stroke="#8088b8" stroke-width="1"/>
<path d="M12.500 .5v3h3" fill="#eef0ff" stroke="#6870b4" stroke-width=".8"/>
<path d="M15.500 4v11.500h-10.500" fill="none" stroke="#50549a" stroke-width="1"/>
<path d="M2.800 8.800h7.400c.2-2.300-1.300-3.700-3.500-3.700-2.300 0-3.800 1.500-3.800 3.700 0 2.200 1.600 3.700 3.900 3.700 1.600 0 2.700-.6 3.300-1.900" fill="none" stroke="#2480e2" stroke-width="2.200"/>
<path d="M3.200 7.300c.8-1.600 2.400-2.300 4-1.900" fill="none" stroke="#4cb4f6" stroke-width=".9"/>
<path d="M1.300 13.200C0 10.300 3.500 5.300 10 3.600c1.700-.4 2 .3 1.400 1.200" fill="none" stroke="#3e9cec" stroke-width=".9" stroke-dasharray="2.500 .6"/>
</svg><span id="t123" style="position:absolute;left:718px;top:750px;font:bold 11px/12px 'Liberation Sans', sans-serif;color:#000;white-space:pre;letter-spacing:0.280px;">Untitled Page ...</span><div style="position:absolute;left:816px;top:744px;width:206px;height:22px;background:#d4d0c8;box-sizing:border-box;border:1px solid;border-color:#808080 #fff #fff #808080;"></div><svg style="position:absolute;left:819px;top:747px" width="16" height="16" viewBox="0 0 16 16"><path d="M1 4h14v9H1z" fill="#f8d868" stroke="#c89818" stroke-width=".9"/><path d="M1 4l7 5.500L15 4" fill="none" stroke="#c89818" stroke-width=".9"/></svg><svg style="position:absolute;left:837px;top:747px" width="16" height="16" viewBox="0 0 16 16"><path d="M3 9h10l2 5H1z" fill="#c8c8c8" stroke="#606060" stroke-width=".8"/><path d="M8 1v6M5 4.500L8 8l3-3.500" fill="none" stroke="#28a028" stroke-width="2.200"/></svg><svg style="position:absolute;left:855px;top:747px" width="16" height="16" viewBox="0 0 16 16"><rect x=".5" y=".5" width="15" height="15" fill="#fbe3b0" stroke="#e8960c" stroke-width="1.400"/><circle cx="8" cy="8" r="4.500" fill="#fff8e8" stroke="#d88408" stroke-width="1.200"/><path d="M8 5v3.200h2.500" fill="none" stroke="#b06800" stroke-width="1"/></svg><svg style="position:absolute;left:873px;top:747px" width="16" height="16" viewBox="0 0 16 16"><circle cx="8" cy="8" r="7" fill="#fff" stroke="#c01818" stroke-width="1.600"/><path d="M8 3a5 5 0 0 1 4 8M8 13a5 5 0 0 1-4-8" fill="none" stroke="#2040c0" stroke-width="2"/><path d="M5 3l3 0-1 3z" fill="#c01818"/></svg><svg style="position:absolute;left:891px;top:747px" width="16" height="16" viewBox="0 0 16 16"><rect x="5" y="2" width="10" height="8" fill="#4860b8" stroke="#283878" stroke-width=".8"/><rect x="1" y="6" width="10" height="8" fill="#6888d8" stroke="#283878" stroke-width=".8"/></svg><svg style="position:absolute;left:909px;top:747px" width="16" height="16" viewBox="0 0 16 16"><ellipse cx="7" cy="7" rx="5" ry="6" fill="#909090" stroke="#505050" stroke-width=".8"/><ellipse cx="6" cy="7" rx="2.500" ry="3.500" fill="#d8d8d8"/><path d="M12 11c2 1 3 2 3 4" fill="none" stroke="#8090e0" stroke-width="1.200"/></svg><svg style="position:absolute;left:927px;top:747px" width="16" height="16" viewBox="0 0 16 16"><circle cx="8" cy="8" r="6" fill="#e8f6ff" stroke="#18a0e8" stroke-width="2.800"/><path d="M10 10l4 4.500" stroke="#18a0e8" stroke-width="2.800"/></svg><svg style="position:absolute;left:945px;top:747px" width="16" height="16" viewBox="0 0 16 16"><rect x="6" y="2" width="10" height="12" fill="#88c820"/><path d="M1 8c3-5 9-5 10 0-1 4-7 4-10 0z" fill="#e8f8c0" stroke="#304010" stroke-width=".9"/><circle cx="6" cy="8" r="2" fill="none" stroke="#304010" stroke-width=".9"/></svg><span id="t124" style="position:absolute;left:968px;top:749px;font:normal 11px/12px 'Liberation Sans', sans-serif;color:#000;white-space:pre;letter-spacing:-0.299px;">12:08 PM</span>
</div></body></html>
